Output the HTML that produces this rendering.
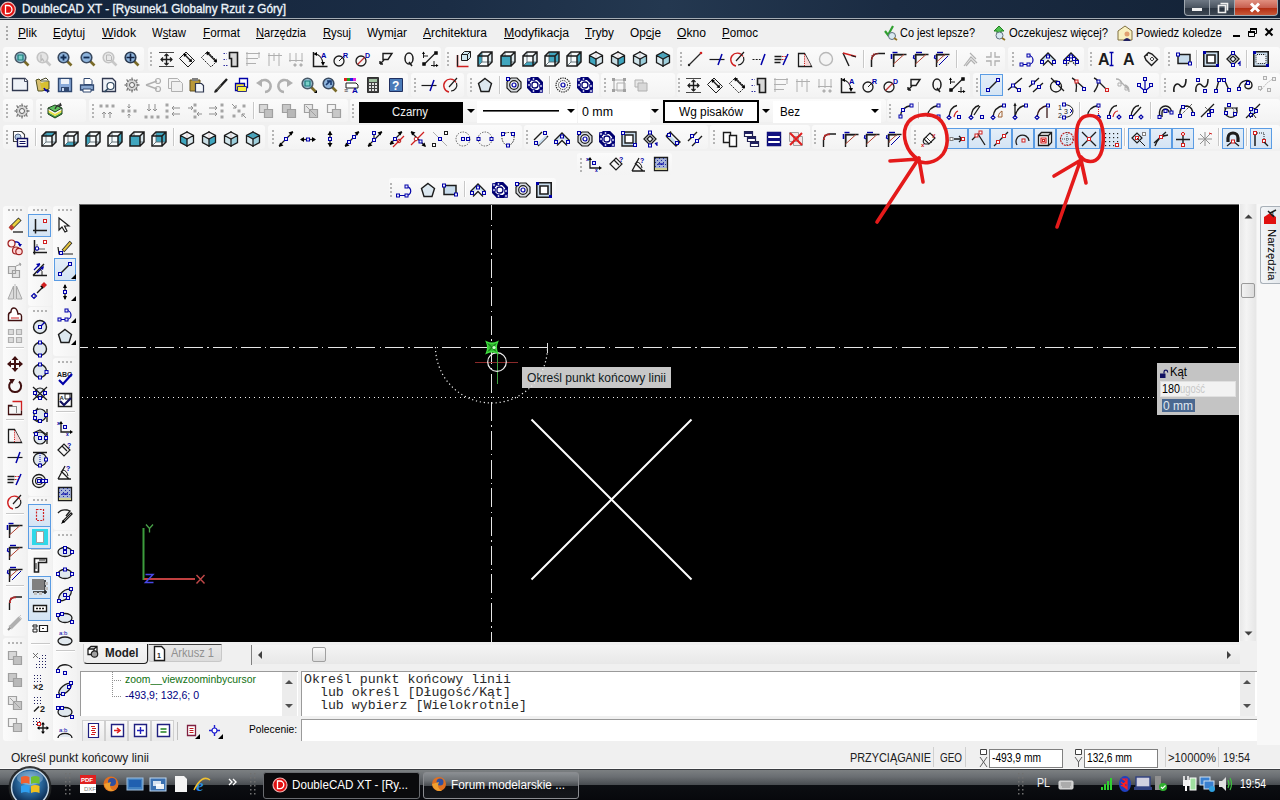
<!DOCTYPE html><html><head><meta charset="utf-8"><style>
*{margin:0;padding:0;box-sizing:border-box}
html,body{width:1280px;height:800px;overflow:hidden;background:#f0f0f0;font-family:"Liberation Sans",sans-serif}
body{position:relative}
.a{position:absolute}
.t{position:absolute;white-space:nowrap;line-height:1}
svg{position:absolute;left:0;top:0}
</style></head><body><div class="a" style="left:0px;top:0px;width:1280px;height:18px;background:linear-gradient(90deg,#13233a 0%,#1b2d45 35%,#243850 52%,#1a2b42 70%,#132236 100%)"></div><div class="a" style="left:0px;top:18px;width:1280px;height:1px;background:#a4acb4"></div><div class="a" style="left:0px;top:19px;width:1280px;height:1px;background:#1c2430"></div><div class="t" style="left:22px;top:2.92px;font-size:12.5px;color:#f4f8fc;font-family:'Liberation Sans',sans-serif;transform:scaleX(0.9390);transform-origin:0 0;-webkit-text-stroke:0.35px #e8f0f8">DoubleCAD XT - [Rysunek1 Globalny Rzut z Góry]</div><div class="a" style="left:1184px;top:0px;width:26px;height:16px;background:linear-gradient(#6e7884,#4a5460 50%,#2a3440 51%,#3c4652);border:1px solid #a0a8b0;border-top:none;border-radius:0 0 0 4px"></div><div class="a" style="left:1210px;top:0px;width:25px;height:16px;background:linear-gradient(#6e7884,#4a5460 50%,#2a3440 51%,#3c4652);border:1px solid #a0a8b0;border-top:none;border-left:none"></div><div class="a" style="left:1235px;top:0px;width:43px;height:16px;background:linear-gradient(#e09080,#c86050 50%,#b02a10 51%,#c85838);border:1px solid #a0a8b0;border-top:none;border-left:none;border-radius:0 0 4px 0"></div><div class="a" style="left:0px;top:20px;width:1280px;height:749px;background:#f0f0f0"></div><div class="a" style="left:110px;top:151px;width:1170px;height:53px;background:#f4f4f4"></div><div class="t" style="left:18px;top:26.84px;font-size:12px;color:#000;font-family:'Liberation Sans',sans-serif;transform:scaleX(0.9814);transform-origin:0 0;"><u>P</u>lik</div><div class="t" style="left:53px;top:26.84px;font-size:12px;color:#000;font-family:'Liberation Sans',sans-serif;transform:scaleX(0.9588);transform-origin:0 0;"><u>E</u>dytuj</div><div class="t" style="left:102px;top:26.84px;font-size:12px;color:#000;font-family:'Liberation Sans',sans-serif;transform:scaleX(1.0197);transform-origin:0 0;"><u>W</u>idok</div><div class="t" style="left:152px;top:26.84px;font-size:12px;color:#000;font-family:'Liberation Sans',sans-serif;transform:scaleX(0.9440);transform-origin:0 0;">W<u>s</u>taw</div><div class="t" style="left:203px;top:26.84px;font-size:12px;color:#000;font-family:'Liberation Sans',sans-serif;transform:scaleX(0.9729);transform-origin:0 0;"><u>F</u>ormat</div><div class="t" style="left:256px;top:26.84px;font-size:12px;color:#000;font-family:'Liberation Sans',sans-serif;transform:scaleX(0.9254);transform-origin:0 0;"><u>N</u>arzędzia</div><div class="t" style="left:323px;top:26.84px;font-size:12px;color:#000;font-family:'Liberation Sans',sans-serif;transform:scaleX(0.9328);transform-origin:0 0;"><u>R</u>ysuj</div><div class="t" style="left:367px;top:26.84px;font-size:12px;color:#000;font-family:'Liberation Sans',sans-serif;transform:scaleX(0.9861);transform-origin:0 0;">Wym<u>i</u>ar</div><div class="t" style="left:423px;top:26.84px;font-size:12px;color:#000;font-family:'Liberation Sans',sans-serif;transform:scaleX(0.9993);transform-origin:0 0;"><u>A</u>rchitektura</div><div class="t" style="left:504px;top:26.84px;font-size:12px;color:#000;font-family:'Liberation Sans',sans-serif;transform:scaleX(1.0256);transform-origin:0 0;"><u>M</u>odyfikacja</div><div class="t" style="left:585px;top:26.84px;font-size:12px;color:#000;font-family:'Liberation Sans',sans-serif;transform:scaleX(0.9810);transform-origin:0 0;"><u>T</u>ryby</div><div class="t" style="left:630px;top:26.84px;font-size:12px;color:#000;font-family:'Liberation Sans',sans-serif;transform:scaleX(0.9885);transform-origin:0 0;">Op<u>c</u>je</div><div class="t" style="left:677px;top:26.84px;font-size:12px;color:#000;font-family:'Liberation Sans',sans-serif;transform:scaleX(1.0103);transform-origin:0 0;"><u>O</u>kno</div><div class="t" style="left:722px;top:26.84px;font-size:12px;color:#000;font-family:'Liberation Sans',sans-serif;transform:scaleX(0.9636);transform-origin:0 0;"><u>P</u>omoc</div><div class="t" style="left:900px;top:26.84px;font-size:12px;color:#000;font-family:'Liberation Sans',sans-serif;transform:scaleX(0.9141);transform-origin:0 0;">Co jest lepsze?</div><div class="t" style="left:1009px;top:26.84px;font-size:12px;color:#000;font-family:'Liberation Sans',sans-serif;transform:scaleX(0.9395);transform-origin:0 0;">Oczekujesz więcej?</div><div class="t" style="left:1136px;top:26.84px;font-size:12px;color:#000;font-family:'Liberation Sans',sans-serif;transform:scaleX(0.9549);transform-origin:0 0;">Powiedz koledze</div><div class="a" style="left:79px;top:204px;width:1161px;height:439px;background:#ffffff"></div><div class="a" style="left:79px;top:204px;width:1160px;height:1px;background:#6a6a6a"></div><div class="a" style="left:79px;top:204px;width:1px;height:438px;background:#6a6a6a"></div><div class="a" style="left:80px;top:205px;width:1159px;height:437px;background:#000"></div><div class="a" style="left:1240px;top:204px;width:16px;height:437px;background:linear-gradient(90deg,#e8e8e8,#f4f4f4 40%,#e6e6e6)"></div><div class="a" style="left:1241px;top:283px;width:14px;height:15px;background:linear-gradient(90deg,#f2f2f2,#dcdcdc);border:1px solid #9a9a9a;border-radius:2px"></div><div class="a" style="left:1257px;top:204px;width:23px;height:541px;background:#f8f8f8"></div><div class="a" style="left:1260px;top:206px;width:20px;height:78px;background:linear-gradient(90deg,#f4f6f8,#e4e8ec);border:1px solid #a8b0b8;border-right:none;border-radius:3px 0 0 3px"></div><div class="a" style="left:80px;top:642px;width:1177px;height:23px;background:#f0f0f0"></div><div class="a" style="left:83px;top:644px;width:65px;height:20px;background:linear-gradient(#f6f6f6,#ececec);border-right:1px solid #202020;border-bottom:1.5px solid #202020;border-left:1px solid #d0d0d0;border-radius:0 0 4px 4px"></div><div class="a" style="left:148px;top:644px;width:74px;height:18px;background:linear-gradient(#e8e8e8,#dcdcdc);border:1px solid #c8c8c8;border-top:1px solid #404040;border-radius:0 0 3px 3px"></div><div class="t" style="left:104.5px;top:646.84px;font-size:12px;color:#202020;font-family:'Liberation Sans',sans-serif;transform:scaleX(0.9662);transform-origin:0 0;"><b>Model</b></div><div class="t" style="left:170.5px;top:646.84px;font-size:12px;color:#909090;font-family:'Liberation Sans',sans-serif;transform:scaleX(0.9210);transform-origin:0 0;">Arkusz 1</div><div class="a" style="left:251px;top:645px;width:1px;height:20px;background:#808080"></div><div class="a" style="left:252px;top:645px;width:988px;height:19px;background:linear-gradient(#f4f4f4,#e8e8e8)"></div><div class="a" style="left:312px;top:647px;width:14px;height:15px;background:linear-gradient(#fafafa,#dcdcdc);border:1px solid #a0a0a0;border-radius:2px"></div><div class="a" style="left:80px;top:671px;width:218px;height:45px;background:#fff;border-top:1px solid #9a9a9a;border-left:1px solid #9a9a9a"></div><div class="a" style="left:282px;top:672px;width:15px;height:44px;background:#ececec"></div><div class="t" style="left:125px;top:674.39px;font-size:11px;color:#107010;font-family:'Liberation Sans',sans-serif;transform:scaleX(0.9439);transform-origin:0 0;">zoom__viewzoominbycursor</div><div class="t" style="left:125px;top:690.09px;font-size:11px;color:#000080;font-family:'Liberation Sans',sans-serif;transform:scaleX(0.9603);transform-origin:0 0;">-493,9; 132,6; 0</div><div class="a" style="left:301px;top:671px;width:956px;height:45px;background:#fff;border-top:1px solid #9a9a9a;border-left:1px solid #9a9a9a"></div><div class="a" style="left:1240px;top:672px;width:15px;height:44px;background:#ececec"></div><div class="t" style="left:304px;top:673.00px;font-size:13px;color:#2a2a2a;font-family:'Liberation Mono',monospace;transform:scaleX(1.0205);transform-origin:0 0;white-space:pre">Określ punkt końcowy linii</div><div class="t" style="left:304px;top:686.00px;font-size:13px;color:#2a2a2a;font-family:'Liberation Mono',monospace;transform:scaleX(1.0205);transform-origin:0 0;white-space:pre">  lub określ [Długość/Kąt]</div><div class="t" style="left:304px;top:699.00px;font-size:13px;color:#2a2a2a;font-family:'Liberation Mono',monospace;transform:scaleX(1.0209);transform-origin:0 0;white-space:pre">  lub wybierz [Wielokrotnie]</div><div class="t" style="left:249px;top:723.69px;font-size:11px;color:#000;font-family:'Liberation Sans',sans-serif;transform:scaleX(0.9343);transform-origin:0 0;">Polecenie:</div><div class="a" style="left:301px;top:719px;width:956px;height:22px;background:#fff;border-top:1px solid #9a9a9a;border-left:1px solid #9a9a9a"></div><div class="t" style="left:11px;top:752.34px;font-size:12px;color:#202020;font-family:'Liberation Sans',sans-serif;transform:scaleX(0.9995);transform-origin:0 0;">Określ punkt końcowy linii</div><div class="t" style="left:850px;top:752.34px;font-size:12px;color:#202020;font-family:'Liberation Sans',sans-serif;transform:scaleX(0.9065);transform-origin:0 0;">PRZYCIĄGANIE</div><div class="t" style="left:940px;top:752.34px;font-size:12px;color:#202020;font-family:'Liberation Sans',sans-serif;transform:scaleX(0.8248);transform-origin:0 0;">GEO</div><div class="a" style="left:989px;top:749px;width:74px;height:19px;background:#fff;border:1px solid #808080"></div><div class="t" style="left:992px;top:752.34px;font-size:12px;color:#000;font-family:'Liberation Sans',sans-serif;transform:scaleX(0.8543);transform-origin:0 0;">-493,9 mm</div><div class="a" style="left:1084px;top:749px;width:74px;height:19px;background:#fff;border:1px solid #808080"></div><div class="t" style="left:1087px;top:752.34px;font-size:12px;color:#000;font-family:'Liberation Sans',sans-serif;transform:scaleX(0.8433);transform-origin:0 0;">132,6 mm</div><div class="t" style="left:1168px;top:752.34px;font-size:12px;color:#202020;font-family:'Liberation Sans',sans-serif;transform:scaleX(0.9403);transform-origin:0 0;">&gt;10000%</div><div class="t" style="left:1223px;top:752.34px;font-size:12px;color:#202020;font-family:'Liberation Sans',sans-serif;transform:scaleX(0.8991);transform-origin:0 0;">19:54</div><div class="a" style="left:0px;top:769px;width:1280px;height:31px;background:linear-gradient(#7e8284 0%,#6a6e72 25%,#4a4e52 50%,#0c0e12 52%,#07080c 100%)"></div><div class="a" style="left:0px;top:769px;width:1280px;height:1px;background:#3a3c40"></div><div class="a" style="left:0px;top:768px;width:1280px;height:1px;background:#fafafa"></div><div class="a" style="left:263px;top:772px;width:157px;height:27px;background:#0a0a0c;border:1px solid #6a6c70;border-radius:3px"></div><div class="a" style="left:423px;top:772px;width:156px;height:27px;background:linear-gradient(#8a8e92 0%,#6e7276 30%,#4a4e52 50%,#101216 52%,#14161a 100%);border:1px solid #8a8c90;border-radius:3px"></div><div class="t" style="left:292px;top:779.34px;font-size:12px;color:#fff;font-family:'Liberation Sans',sans-serif;transform:scaleX(0.9700);transform-origin:0 0;">DoubleCAD XT - [Ry...</div><div class="t" style="left:451px;top:779.34px;font-size:12px;color:#fff;font-family:'Liberation Sans',sans-serif;transform:scaleX(0.9824);transform-origin:0 0;">Forum modelarskie ...</div><div class="t" style="left:1037px;top:776.84px;font-size:12px;color:#f0f0f0;font-family:'Liberation Sans',sans-serif;transform:scaleX(0.8851);transform-origin:0 0;">PL</div><div class="t" style="left:1240px;top:778.44px;font-size:12px;color:#fff;font-family:'Liberation Sans',sans-serif;transform:scaleX(0.8658);transform-origin:0 0;">19:54</div><div class="a" style="left:522px;top:367px;width:149px;height:21px;background:#c8c8c8"></div><div class="t" style="left:527px;top:371.84px;font-size:12px;color:#101820;font-family:'Liberation Sans',sans-serif;transform:scaleX(1.0068);transform-origin:0 0;">Określ punkt końcowy linii</div><div class="a" style="left:1157px;top:363px;width:82px;height:52px;background:#c4c4c4"></div><div class="a" style="left:1160px;top:381px;width:76px;height:16px;background:#f2f2f2;border:1px solid #e0e0e0"></div><div class="t" style="left:1170px;top:365.54px;font-size:12px;color:#000;font-family:'Liberation Sans',sans-serif;transform:scaleX(0.9436);transform-origin:0 0;">Kąt</div><div class="t" style="left:1162px;top:382.64px;font-size:12px;color:#000;font-family:'Liberation Sans',sans-serif;transform:scaleX(0.8986);transform-origin:0 0;">180</div><div class="t" style="left:1180px;top:382.64px;font-size:12px;color:#c8c8c8;font-family:'Liberation Sans',sans-serif;transform:scaleX(0.7805);transform-origin:0 0;">ugość</div><div class="a" style="left:1162px;top:399px;width:33px;height:13px;background:#4a6890"></div><div class="t" style="left:1163px;top:399.84px;font-size:12px;color:#e0e8f0;font-family:'Liberation Sans',sans-serif;transform:scaleX(1.0000);transform-origin:0 0;">0 mm</div><div class="t" style="left:1265px;top:229px;font-size:11.5px;color:#000;transform-origin:0 0;transform:translate(11.5px,0) rotate(90deg) scaleX(0.99)">Narzędzia</div><div class="a" style="left:3px;top:47px;width:141px;height:24px;background:linear-gradient(#fbfbfb,#f3f3f3);border-radius:3px"></div><div class="a" style="left:148px;top:47px;width:293px;height:24px;background:linear-gradient(#fbfbfb,#f3f3f3);border-radius:3px"></div><div class="a" style="left:445px;top:47px;width:228px;height:24px;background:linear-gradient(#fbfbfb,#f3f3f3);border-radius:3px"></div><div class="a" style="left:677px;top:47px;width:328px;height:24px;background:linear-gradient(#fbfbfb,#f3f3f3);border-radius:3px"></div><div class="a" style="left:1008px;top:47px;width:76px;height:24px;background:linear-gradient(#fbfbfb,#f3f3f3);border-radius:3px"></div><div class="a" style="left:1088px;top:47px;width:72px;height:24px;background:linear-gradient(#fbfbfb,#f3f3f3);border-radius:3px"></div><div class="a" style="left:1164px;top:47px;width:116px;height:24px;background:linear-gradient(#fbfbfb,#f3f3f3);border-radius:3px"></div><div class="a" style="left:3px;top:73px;width:405px;height:24px;background:linear-gradient(#fbfbfb,#f3f3f3);border-radius:3px"></div><div class="a" style="left:411px;top:73px;width:53px;height:24px;background:linear-gradient(#fbfbfb,#f3f3f3);border-radius:3px"></div><div class="a" style="left:467px;top:73px;width:132px;height:24px;background:linear-gradient(#fbfbfb,#f3f3f3);border-radius:3px"></div><div class="a" style="left:601px;top:73px;width:74px;height:24px;background:linear-gradient(#fbfbfb,#f3f3f3);border-radius:3px"></div><div class="a" style="left:677px;top:73px;width:293px;height:24px;background:linear-gradient(#fbfbfb,#f3f3f3);border-radius:3px"></div><div class="a" style="left:973px;top:73px;width:186px;height:24px;background:linear-gradient(#fbfbfb,#f3f3f3);border-radius:3px"></div><div class="a" style="left:1161px;top:73px;width:119px;height:24px;background:linear-gradient(#fbfbfb,#f3f3f3);border-radius:3px"></div><div class="a" style="left:3px;top:99px;width:30px;height:23px;background:linear-gradient(#fbfbfb,#f3f3f3);border-radius:3px"></div><div class="a" style="left:36px;top:99px;width:50px;height:23px;background:linear-gradient(#fbfbfb,#f3f3f3);border-radius:3px"></div><div class="a" style="left:89px;top:99px;width:259px;height:23px;background:linear-gradient(#fbfbfb,#f3f3f3);border-radius:3px"></div><div class="a" style="left:350px;top:99px;width:536px;height:23px;background:linear-gradient(#fbfbfb,#f3f3f3);border-radius:3px"></div><div class="a" style="left:887px;top:99px;width:393px;height:23px;background:linear-gradient(#fbfbfb,#f3f3f3);border-radius:3px"></div><div class="a" style="left:3px;top:125px;width:262px;height:24px;background:linear-gradient(#fbfbfb,#f3f3f3);border-radius:3px"></div><div class="a" style="left:268px;top:125px;width:254px;height:24px;background:linear-gradient(#fbfbfb,#f3f3f3);border-radius:3px"></div><div class="a" style="left:524px;top:125px;width:184px;height:24px;background:linear-gradient(#fbfbfb,#f3f3f3);border-radius:3px"></div><div class="a" style="left:710px;top:125px;width:100px;height:24px;background:linear-gradient(#fbfbfb,#f3f3f3);border-radius:3px"></div><div class="a" style="left:812px;top:125px;width:96px;height:24px;background:linear-gradient(#fbfbfb,#f3f3f3);border-radius:3px"></div><div class="a" style="left:911px;top:125px;width:369px;height:24px;background:linear-gradient(#fbfbfb,#f3f3f3);border-radius:3px"></div><div class="a" style="left:577px;top:153px;width:95px;height:22px;background:linear-gradient(#fbfbfb,#f3f3f3);border-radius:3px"></div><div class="a" style="left:389px;top:178px;width:167px;height:22px;background:linear-gradient(#fbfbfb,#f3f3f3);border-radius:3px"></div><div class="a" style="left:980px;top:74px;width:23px;height:22px;background:linear-gradient(#e4eef8,#d4e4f4);border:1px solid #5a9ce4"></div><div class="a" style="left:946px;top:128px;width:22px;height:21px;background:linear-gradient(#e4eef8,#d4e4f4);border:1px solid #5a9ce4"></div><div class="a" style="left:968px;top:128px;width:22px;height:21px;background:linear-gradient(#e4eef8,#d4e4f4);border:1px solid #5a9ce4"></div><div class="a" style="left:990px;top:128px;width:22px;height:21px;background:linear-gradient(#e4eef8,#d4e4f4);border:1px solid #5a9ce4"></div><div class="a" style="left:1012px;top:128px;width:22px;height:21px;background:linear-gradient(#e4eef8,#d4e4f4);border:1px solid #5a9ce4"></div><div class="a" style="left:1034px;top:128px;width:22px;height:21px;background:linear-gradient(#e4eef8,#d4e4f4);border:1px solid #5a9ce4"></div><div class="a" style="left:1056px;top:128px;width:22px;height:21px;background:linear-gradient(#e4eef8,#d4e4f4);border:1px solid #5a9ce4"></div><div class="a" style="left:1078px;top:128px;width:22px;height:21px;background:linear-gradient(#e4eef8,#d4e4f4);border:1px solid #5a9ce4"></div><div class="a" style="left:1100px;top:128px;width:22px;height:21px;background:linear-gradient(#e4eef8,#d4e4f4);border:1px solid #5a9ce4"></div><div class="a" style="left:1128px;top:128px;width:22px;height:21px;background:linear-gradient(#e4eef8,#d4e4f4);border:1px solid #5a9ce4"></div><div class="a" style="left:1150px;top:128px;width:22px;height:21px;background:linear-gradient(#e4eef8,#d4e4f4);border:1px solid #5a9ce4"></div><div class="a" style="left:1172px;top:128px;width:22px;height:21px;background:linear-gradient(#e4eef8,#d4e4f4);border:1px solid #5a9ce4"></div><div class="a" style="left:1222px;top:128px;width:22px;height:21px;background:linear-gradient(#e4eef8,#d4e4f4);border:1px solid #5a9ce4"></div><div class="a" style="left:1250px;top:128px;width:22px;height:21px;background:linear-gradient(#e4eef8,#d4e4f4);border:1px solid #5a9ce4"></div><div class="a" style="left:359px;top:102px;width:104px;height:21px;background:#000"></div><div class="t" style="left:392px;top:106.34px;font-size:12px;color:#f0f0f0;font-family:'Liberation Sans',sans-serif;transform:scaleX(0.9470);transform-origin:0 0;">Czarny</div><div class="a" style="left:477px;top:101px;width:100px;height:22px;background:#fff"></div><div class="a" style="left:578px;top:101px;width:72px;height:22px;background:#fff"></div><div class="t" style="left:582px;top:106.34px;font-size:12px;color:#000;font-family:'Liberation Sans',sans-serif;transform:scaleX(1.0333);transform-origin:0 0;">0 mm</div><div class="a" style="left:663px;top:100px;width:96px;height:23px;background:#fff;border:2px solid #000"></div><div class="t" style="left:679px;top:106.34px;font-size:12px;color:#000;font-family:'Liberation Sans',sans-serif;transform:scaleX(0.9894);transform-origin:0 0;">Wg pisaków</div><div class="a" style="left:773px;top:101px;width:108px;height:22px;background:#fff"></div><div class="t" style="left:780px;top:106.34px;font-size:12px;color:#000;font-family:'Liberation Sans',sans-serif;transform:scaleX(0.9668);transform-origin:0 0;">Bez</div><div class="a" style="left:3px;top:206px;width:23px;height:430px;background:linear-gradient(90deg,#fbfbfb,#f2f2f2);border-radius:3px"></div><div class="a" style="left:3px;top:638px;width:23px;height:103px;background:linear-gradient(90deg,#fbfbfb,#f2f2f2);border-radius:3px"></div><div class="a" style="left:28px;top:206px;width:24px;height:100px;background:linear-gradient(90deg,#fbfbfb,#f2f2f2);border-radius:3px"></div><div class="a" style="left:28px;top:307px;width:24px;height:189px;background:linear-gradient(90deg,#fbfbfb,#f2f2f2);border-radius:3px"></div><div class="a" style="left:28px;top:497px;width:24px;height:244px;background:linear-gradient(90deg,#fbfbfb,#f2f2f2);border-radius:3px"></div><div class="a" style="left:53px;top:206px;width:24px;height:150px;background:linear-gradient(90deg,#fbfbfb,#f2f2f2);border-radius:3px"></div><div class="a" style="left:53px;top:358px;width:24px;height:172px;background:linear-gradient(90deg,#fbfbfb,#f2f2f2);border-radius:3px"></div><div class="a" style="left:53px;top:531px;width:24px;height:210px;background:linear-gradient(90deg,#fbfbfb,#f2f2f2);border-radius:3px"></div><div class="a" style="left:28px;top:214px;width:23px;height:23px;background:linear-gradient(#e4eef8,#d4e4f4);border:1px solid #5a9ce4"></div><div class="a" style="left:54px;top:258px;width:22px;height:23px;background:linear-gradient(#e4eef8,#d4e4f4);border:1px solid #5a9ce4"></div><div class="a" style="left:28px;top:504px;width:23px;height:23px;background:linear-gradient(#e4eef8,#d4e4f4);border:1px solid #5a9ce4"></div><div class="a" style="left:28px;top:526px;width:23px;height:23px;background:linear-gradient(#e4eef8,#d4e4f4);border:1px solid #5a9ce4"></div><div class="a" style="left:28px;top:576px;width:23px;height:23px;background:linear-gradient(#e4eef8,#d4e4f4);border:1px solid #5a9ce4"></div><div class="a" style="left:28px;top:598px;width:23px;height:23px;background:linear-gradient(#e4eef8,#d4e4f4);border:1px solid #5a9ce4"></div><div class="a" style="left:82px;top:720px;width:23px;height:21px;background:linear-gradient(#fafafa,#eaeaea);border:1px solid #d0d0d0;border-bottom:none"></div><div class="a" style="left:105px;top:720px;width:23px;height:21px;background:linear-gradient(#fafafa,#eaeaea);border:1px solid #d0d0d0;border-bottom:none"></div><div class="a" style="left:128px;top:720px;width:23px;height:21px;background:linear-gradient(#fafafa,#eaeaea);border:1px solid #d0d0d0;border-bottom:none"></div><div class="a" style="left:151px;top:720px;width:23px;height:21px;background:linear-gradient(#fafafa,#eaeaea);border:1px solid #d0d0d0;border-bottom:none"></div><svg width="1280" height="800" viewBox="0 0 1280 800"><rect x="6" y="26" width="2" height="2" fill="#a8a8a8"/><rect x="6" y="30" width="2" height="2" fill="#a8a8a8"/><rect x="6" y="34" width="2" height="2" fill="#a8a8a8"/><rect x="6" y="38" width="2" height="2" fill="#a8a8a8"/><rect x="6" y="52" width="2" height="2" fill="#b4b4b4"/><rect x="6" y="56" width="2" height="2" fill="#b4b4b4"/><rect x="6" y="60" width="2" height="2" fill="#b4b4b4"/><rect x="6" y="64" width="2" height="2" fill="#b4b4b4"/><rect x="150" y="52" width="2" height="2" fill="#b4b4b4"/><rect x="150" y="56" width="2" height="2" fill="#b4b4b4"/><rect x="150" y="60" width="2" height="2" fill="#b4b4b4"/><rect x="150" y="64" width="2" height="2" fill="#b4b4b4"/><rect x="447" y="52" width="2" height="2" fill="#b4b4b4"/><rect x="447" y="56" width="2" height="2" fill="#b4b4b4"/><rect x="447" y="60" width="2" height="2" fill="#b4b4b4"/><rect x="447" y="64" width="2" height="2" fill="#b4b4b4"/><rect x="680" y="52" width="2" height="2" fill="#b4b4b4"/><rect x="680" y="56" width="2" height="2" fill="#b4b4b4"/><rect x="680" y="60" width="2" height="2" fill="#b4b4b4"/><rect x="680" y="64" width="2" height="2" fill="#b4b4b4"/><rect x="1012" y="52" width="2" height="2" fill="#b4b4b4"/><rect x="1012" y="56" width="2" height="2" fill="#b4b4b4"/><rect x="1012" y="60" width="2" height="2" fill="#b4b4b4"/><rect x="1012" y="64" width="2" height="2" fill="#b4b4b4"/><rect x="1090" y="52" width="2" height="2" fill="#b4b4b4"/><rect x="1090" y="56" width="2" height="2" fill="#b4b4b4"/><rect x="1090" y="60" width="2" height="2" fill="#b4b4b4"/><rect x="1090" y="64" width="2" height="2" fill="#b4b4b4"/><rect x="1168" y="52" width="2" height="2" fill="#b4b4b4"/><rect x="1168" y="56" width="2" height="2" fill="#b4b4b4"/><rect x="1168" y="60" width="2" height="2" fill="#b4b4b4"/><rect x="1168" y="64" width="2" height="2" fill="#b4b4b4"/><rect x="863" y="50" width="1" height="18" fill="#c8c8c8"/><rect x="864" y="50" width="1" height="18" fill="#ffffff"/><rect x="956" y="50" width="1" height="18" fill="#c8c8c8"/><rect x="957" y="50" width="1" height="18" fill="#ffffff"/><rect x="1196" y="50" width="1" height="18" fill="#c8c8c8"/><rect x="1197" y="50" width="1" height="18" fill="#ffffff"/><rect x="1246" y="50" width="1" height="18" fill="#c8c8c8"/><rect x="1247" y="50" width="1" height="18" fill="#ffffff"/><g transform="translate(14,51)"><path d="M9.5 9.5 L14.5 14.5" fill="none" stroke="#7a6a28" stroke-width="2.6" /><circle cx="6.5" cy="6.5" r="5.3" fill="#9cc4d8" stroke="#4a5a68" stroke-width="1.6"/><path d="M4 4h5v5h-5z" fill="#7ad0c8" stroke="#1a7a7a" stroke-width="1.2" /></g><g transform="translate(36,51)"><path d="M9.5 9.5 L14.5 14.5" fill="none" stroke="#c8c8c8" stroke-width="2.6" /><circle cx="6.5" cy="6.5" r="5.3" fill="#e4e4e4" stroke="#c4c4c4" stroke-width="1.6"/><path d="M5 3.5 L5 9.5 L6.5 8 L8 10.5" fill="none" stroke="#b8b8b8" stroke-width="1.2" /></g><g transform="translate(57,51)"><path d="M9.5 9.5 L14.5 14.5" fill="none" stroke="#7a6a28" stroke-width="2.6" /><circle cx="6.5" cy="6.5" r="5.3" fill="#8eb4dc" stroke="#3a4a60" stroke-width="1.6"/><path d="M3.5 6.5h6M6.5 3.5v6" fill="none" stroke="#102a50" stroke-width="1.8" /></g><g transform="translate(80,51)"><path d="M9.5 9.5 L14.5 14.5" fill="none" stroke="#7a6a28" stroke-width="2.6" /><circle cx="6.5" cy="6.5" r="5.3" fill="#8eb4dc" stroke="#3a4a60" stroke-width="1.6"/><path d="M3.5 6.5h6" fill="none" stroke="#102a50" stroke-width="1.8" /></g><g transform="translate(102,51)"><path d="M9.5 9.5 L14.5 14.5" fill="none" stroke="#c8c8c8" stroke-width="2.6" /><circle cx="6.5" cy="6.5" r="5.3" fill="#e8e8e8" stroke="#c4c4c4" stroke-width="1.6"/><path d="M4.5 4h3.5l1.5 1.5v4h-5z" fill="none" stroke="#b8b8b8" stroke-width="1" /></g><g transform="translate(124,51)"><path d="M9.5 9.5 L14.5 14.5" fill="none" stroke="#7a6a28" stroke-width="2.6" /><circle cx="6.5" cy="6.5" r="5.3" fill="#8eb4dc" stroke="#2a3a50" stroke-width="1.6"/><path d="M2.5 6.5h8M6.5 2.5v8" fill="none" stroke="#102040" stroke-width="1.6" /></g><g transform="translate(158,51)"><path d="M1 1.5h15M1 15.5h15" fill="none" stroke="#1c1c1c" stroke-width="1.2" opacity="0.8"/><path d="M8.5 3v11M3 8.5h11" fill="none" stroke="#1c1c1c" stroke-width="1.4" /><path d="M6.5 5 L8.5 3 L10.5 5 M6.5 12 L8.5 14 L10.5 12 M5 6.5 L3 8.5 L5 10.5 M12 6.5 L14 8.5 L12 10.5" fill="none" stroke="#1c1c1c" stroke-width="1.2" /></g><g transform="translate(179,51)"><path d="M0.5 7.5 L7 1 L15.5 9.5 L9 16 Z" fill="none" stroke="#1c1c1c" stroke-width="1" /><path d="M5.5 3.5 L12 10" fill="none" stroke="#1c1c1c" stroke-width="1.4" /><path d="M4.5 2.5 L8 3 L5 6z M13 11 L12.5 7.5 L9.5 10.5z" fill="#000"/></g><g transform="translate(201,51)"><path d="M0.5 6.5 L6.5 0.5 L16 10 L10 16 Z" fill="none" stroke="#1c1c1c" stroke-width="1" stroke-dasharray="1.5 1"/><path d="M6 1.5 L15 10.5" fill="none" stroke="#1c1c1c" stroke-width="1.4" /><path d="M5 1 L9 1.3 L6 4.5z M16 11.5 L15.5 7.5 L12.5 10.5z" fill="#000"/></g><g transform="translate(223,51)"><path d="M0.5 2.5h3M0.5 8.5h3M0.5 14.5h4" fill="none" stroke="#3030a0" stroke-width="1" stroke-dasharray="1.5 1"/><path d="M6.5 1.5h8v14h-6v-8h-2z" fill="#d8d8d8" stroke="#1c1c1c" stroke-width="1.6" /></g><g transform="translate(245,51)"><path d="M1 2.5h14M1 7.5h12M1 12.5h10M2 1v14M14 1v6" fill="none" stroke="#b0b0b0" stroke-width="1" /></g><g transform="translate(267,51)"><path d="M1 4.5h14M2 2v13M7 2v8M12 2v13" fill="none" stroke="#b0b0b0" stroke-width="1" /></g><g transform="translate(288,51)"><path d="M1 9.5h14M2 2v9M8 2v9M14 2v9" fill="none" stroke="#b0b0b0" stroke-width="1" /><path d="M6 13h2v2h-2zM12 13h2v2h-2z" fill="#b0b0b0" stroke="#b0b0b0" stroke-width="1" /></g><g transform="translate(312,51)"><path d="M1.5 1v14.5h14" fill="none" stroke="#1c1c1c" stroke-width="1.5" /><path d="M2.5 3 Q10 3.5 11 13" fill="none" stroke="#1c1c1c" stroke-width="1.1" /><path d="M1.5 3 L5 1 L5 5z M11 15 L9 11 L13 11z" fill="#000"/><text x="9" y="7" font-family="Liberation Sans" font-size="7.5" font-weight="bold" fill="#0000a8">A</text></g><g transform="translate(333,51)"><circle cx="6" cy="10" r="5" fill="none" stroke="#1c1c1c" stroke-width="1.3"/><path d="M6 10 L11 5" fill="none" stroke="#1c1c1c" stroke-width="1" /><text x="10" y="6.5" font-family="Liberation Sans" font-size="7" font-weight="bold" fill="#0000a8">R</text></g><g transform="translate(355,51)"><circle cx="6" cy="10" r="5" fill="none" stroke="#1c1c1c" stroke-width="1.3"/><path d="M2.5 13.5 L9.5 6.5" fill="none" stroke="#c03030" stroke-width="1.2" /><text x="10" y="6.5" font-family="Liberation Sans" font-size="7" font-weight="bold" fill="#0000a8">D</text></g><g transform="translate(377,51)"><path d="M3 13 L7 9 M3 13v-3M3 13h3" fill="none" stroke="#1c1c1c" stroke-width="1.4" /><path d="M6 8.5h5l4 -6h-9z" fill="none" stroke="#1c1c1c" stroke-width="1.4" /></g><g transform="translate(401,51)"><ellipse cx="8" cy="7.5" rx="4" ry="5.5" fill="none" stroke="#1c1c1c" stroke-width="1.5"/><path d="M8 11 L11 15" fill="none" stroke="#1c1c1c" stroke-width="1.5" /></g><g transform="translate(422,51)"><path d="M1.5 14 L14 1.5" fill="none" stroke="#1c1c1c" stroke-width="1.3" /><path d="M1.5 1v6M1 5h5M9 14.5h6M12 10v6" fill="none" stroke="#1c1c1c" stroke-width="1" /><path d="M0 3 L3 3 L1.5 0.5z M14 13 L14 16 L16.5 14.5z" fill="#000"/><rect x="0.75" y="11.75" width="2.5" height="2.5" fill="#000" stroke="#1c1c1c" stroke-width="1"/><rect x="12.75" y="0.75" width="2.5" height="2.5" fill="#000" stroke="#1c1c1c" stroke-width="1"/></g><g transform="translate(455,51)"><path d="M2.5 4v11.5h11" fill="none" stroke="#d02020" stroke-width="1.5" /><path d="M2.5 4v11.5" fill="none" stroke="#1c1c1c" stroke-width="1.2" /><path d="M6.5 3.5l3 -3h6v6l-3 3h-6z M6.5 3.5h6v6M12.5 3.5l3 -3" fill="#d0e8f0" stroke="#1c1c1c" stroke-width="1" /></g><g transform="translate(477,51)"><path d="M1 5 L5 1 H15 V11 L11 15 H1z" fill="#f6fafb"/><path d="M11 5 L15 1 V11 L11 15z" fill="#dde9ee"/><path d="M1 5 L5 1 V11 L1 15z" fill="#40a6bf"/><path d="M5 1 V11 H15 M5 11 L1 15" fill="none" stroke="#5a6a70" stroke-width="0.9" /><path d="M1 5 H11 V15 H1z M1 5 L5 1 H15 V11 L11 15 M11 5 L15 1" fill="none" stroke="#1c1c1c" stroke-width="1.5" /></g><g transform="translate(500,51)"><path d="M1 5 L5 1 H15 V11 L11 15 H1z" fill="#f6fafb"/><path d="M11 5 L15 1 V11 L11 15z" fill="#dde9ee"/><path d="M5 1 V11 H15 M5 11 L1 15" fill="none" stroke="#5a6a70" stroke-width="0.9" /><path d="M1 5 H11 V15 H1z" fill="#40a6bf"/><path d="M1 5 H11 V15 H1z M1 5 L5 1 H15 V11 L11 15 M11 5 L15 1" fill="none" stroke="#1c1c1c" stroke-width="1.5" /></g><g transform="translate(522,51)"><path d="M1 5 L5 1 H15 V11 L11 15 H1z" fill="#f6fafb"/><path d="M11 5 L15 1 V11 L11 15z" fill="#dde9ee"/><path d="M1 15 L5 11 H15 L11 15z" fill="#40a6bf"/><path d="M5 1 V11 H15 M5 11 L1 15" fill="none" stroke="#5a6a70" stroke-width="0.9" /><path d="M1 5 H11 V15 H1z M1 5 L5 1 H15 V11 L11 15 M11 5 L15 1" fill="none" stroke="#1c1c1c" stroke-width="1.5" /></g><g transform="translate(544,51)"><path d="M1 5 L5 1 H15 V11 L11 15 H1z" fill="#f6fafb"/><path d="M11 5 L15 1 V11 L11 15z" fill="#dde9ee"/><path d="M5 1 H15 V11 H5z" fill="#40a6bf"/><path d="M5 1 V11 H15 M5 11 L1 15" fill="none" stroke="#5a6a70" stroke-width="0.9" /><path d="M1 5 H11 V15 H1z M1 5 L5 1 H15 V11 L11 15 M11 5 L15 1" fill="none" stroke="#1c1c1c" stroke-width="1.5" /></g><g transform="translate(566,51)"><path d="M1 5 L5 1 H15 V11 L11 15 H1z" fill="#f6fafb"/><path d="M11 5 L15 1 V11 L11 15z" fill="#dde9ee"/><path d="M11 5 L15 1 V11 L11 15z" fill="#40a6bf"/><path d="M5 1 V11 H15 M5 11 L1 15" fill="none" stroke="#5a6a70" stroke-width="0.9" /><path d="M1 5 H11 V15 H1z M1 5 L5 1 H15 V11 L11 15 M11 5 L15 1" fill="none" stroke="#1c1c1c" stroke-width="1.5" /></g><g transform="translate(588,51)"><path d="M8 1 L14.5 4.5 L8 8 L1.5 4.5z" fill="#f4f8fa"/><path d="M1.5 4.5 L8 8 V15 L1.5 11.5z" fill="#40a6bf"/><path d="M14.5 4.5 L8 8 V15 L14.5 11.5z" fill="#d8e8ee"/><path d="M8 1 V8" fill="none" stroke="#c08080" stroke-width="0.8" opacity=".5"/><path d="M8 1 L14.5 4.5 V11.5 L8 15 L1.5 11.5 V4.5z M1.5 4.5 L8 8 L14.5 4.5" fill="none" stroke="#1c1c1c" stroke-width="1.3" /><path d="M8 8 V16" fill="none" stroke="#1c1c1c" stroke-width="1.3" /><path d="M8 0 V2" fill="none" stroke="#1c1c1c" stroke-width="1" /></g><g transform="translate(610,51)"><path d="M8 1 L14.5 4.5 L8 8 L1.5 4.5z" fill="#f4f8fa"/><path d="M1.5 4.5 L8 8 V15 L1.5 11.5z" fill="#c8dde4"/><path d="M14.5 4.5 L8 8 V15 L14.5 11.5z" fill="#40a6bf"/><path d="M8 1 V8" fill="none" stroke="#c08080" stroke-width="0.8" opacity=".5"/><path d="M8 1 L14.5 4.5 V11.5 L8 15 L1.5 11.5 V4.5z M1.5 4.5 L8 8 L14.5 4.5" fill="none" stroke="#1c1c1c" stroke-width="1.3" /><path d="M8 8 V16" fill="none" stroke="#1c1c1c" stroke-width="1.3" /><path d="M8 0 V2" fill="none" stroke="#1c1c1c" stroke-width="1" /></g><g transform="translate(632,51)"><path d="M8 1 L14.5 4.5 L8 8 L1.5 4.5z" fill="#e8f2f6"/><path d="M1.5 4.5 L8 8 V15 L1.5 11.5z" fill="#d0e4ea"/><path d="M14.5 4.5 L8 8 V15 L14.5 11.5z" fill="#9ccfdc"/><path d="M8 1 V8" fill="none" stroke="#c08080" stroke-width="0.8" opacity=".5"/><path d="M8 1 L14.5 4.5 V11.5 L8 15 L1.5 11.5 V4.5z M1.5 4.5 L8 8 L14.5 4.5" fill="none" stroke="#1c1c1c" stroke-width="1.3" /><path d="M8 8 V16" fill="none" stroke="#1c1c1c" stroke-width="1.3" /><path d="M8 0 V2" fill="none" stroke="#1c1c1c" stroke-width="1" /></g><g transform="translate(655,51)"><path d="M8 1 L14.5 4.5 L8 8 L1.5 4.5z" fill="#40a6bf"/><path d="M1.5 4.5 L8 8 V15 L1.5 11.5z" fill="#d8eaf0"/><path d="M14.5 4.5 L8 8 V15 L14.5 11.5z" fill="#a0d0dc"/><path d="M8 1 V8" fill="none" stroke="#c08080" stroke-width="0.8" opacity=".5"/><path d="M8 1 L14.5 4.5 V11.5 L8 15 L1.5 11.5 V4.5z M1.5 4.5 L8 8 L14.5 4.5" fill="none" stroke="#1c1c1c" stroke-width="1.3" /><path d="M8 8 V16" fill="none" stroke="#1c1c1c" stroke-width="1.3" /><path d="M8 0 V2" fill="none" stroke="#1c1c1c" stroke-width="1" /></g><g transform="translate(687,51)"><path d="M2 14 L14 2" fill="none" stroke="#2a2a2a" stroke-width="1.2" /><circle cx="2" cy="14" r="1.2" fill="#202020"/><circle cx="14" cy="2" r="1.3" fill="#d02020"/></g><g transform="translate(709,51)"><path d="M0.5 8.5h15" fill="none" stroke="#1c1c1c" stroke-width="1.2" /><path d="M9 14 L13 3" fill="none" stroke="#0000a8" stroke-width="1.5" /></g><g transform="translate(730,51)"><path d="M6 15 A6.5 6.5 0 1 1 13 5.5" fill="none" stroke="#d02020" stroke-width="1.4" /><path d="M8 14 A 6 6 0 0 0 13.5 6" fill="none" stroke="#1c1c1c" stroke-width="1.2" /><path d="M6 10 L14 1" fill="none" stroke="#1c1c1c" stroke-width="1.2" /></g><g transform="translate(752,51)"><path d="M0.5 8.5h8" fill="none" stroke="#1c1c1c" stroke-width="1.2" stroke-dasharray="2 1.2"/><path d="M9 14 L13 3" fill="none" stroke="#0000a8" stroke-width="1.5" /></g><g transform="translate(774,51)"><path d="M0.5 5.5h7M0.5 8.5h7M0.5 11.5h6" fill="none" stroke="#1c1c1c" stroke-width="1.3" /><path d="M8 5.5h4M8 8.5h4" fill="none" stroke="#d02020" stroke-width="1" stroke-dasharray="1.5 1"/><path d="M9 14 L14 3" fill="none" stroke="#0000a8" stroke-width="1.5" /></g><g transform="translate(797,51)"><path d="M1.5 2.5h6l7 13h-13z" fill="none" stroke="#1c1c1c" stroke-width="1.3" /><path d="M8 3.5 L14 14.5 H8z" fill="#f8d8d8"/><path d="M7.5 3v12" fill="none" stroke="#d02020" stroke-width="1" stroke-dasharray="1.2 1"/></g><g transform="translate(818,51)"><circle cx="8" cy="8" r="6.5" fill="#f4f4f4" stroke="#b8b8b8" stroke-width="1.4"/></g><g transform="translate(841,51)"><path d="M2 2 L8 15" fill="none" stroke="#1c1c1c" stroke-width="1.4" /><path d="M2 2 L15 5.5" fill="none" stroke="#d02020" stroke-width="1.3" /><path d="M10 4.5 L15 6" fill="none" stroke="#1c1c1c" stroke-width="1.3" /></g><g transform="translate(869,51)"><path d="M2.5 16V9 Q3 2.5 9.5 2.5H16" fill="none" stroke="#1c1c1c" stroke-width="1.5" /><path d="M3 9 Q4 3.5 9.5 3" fill="none" stroke="#d02020" stroke-width="1" opacity=".0"/><path d="M4 3h4M3 4v4" fill="none" stroke="#d02020" stroke-width="1" stroke-dasharray="1 1"/><path d="M2.5 9 Q3.5 3 9.5 2.5" fill="none" stroke="#a03030" stroke-width="1.2" /></g><g transform="translate(891,51)"><path d="M1.5 1.5h5" fill="none" stroke="#0000a8" stroke-width="1.4" /><path d="M2.5 16V3.5h13" fill="none" stroke="#1c1c1c" stroke-width="1.4" /><path d="M3.5 4.5h7M3.5 4.5v7" fill="none" stroke="#1c1c1c" stroke-width="1" stroke-dasharray="1 1"/><path d="M2.5 13 L13 3.5" fill="none" stroke="#b04030" stroke-width="1" /><path d="M0.5 3v5" fill="none" stroke="#0000a8" stroke-width="1.6" /></g><g transform="translate(913,51)"><path d="M3 1.5h6" fill="none" stroke="#0000a8" stroke-width="1.4" /><path d="M2.5 16V3.5h13" fill="none" stroke="#1c1c1c" stroke-width="1.4" /><path d="M3.5 4.5h7M3.5 4.5v7" fill="none" stroke="#1c1c1c" stroke-width="1" stroke-dasharray="1 1"/><path d="M2.5 13 L13 3.5" fill="none" stroke="#b04030" stroke-width="1" /><path d="M1 4 L0.5 7 L2 8" fill="none" stroke="#0000a8" stroke-width="1.4" /></g><g transform="translate(934,51)"><path d="M3 1.5h6" fill="none" stroke="#0000a8" stroke-width="1.4" /><path d="M2.5 16V3.5h13" fill="none" stroke="#1c1c1c" stroke-width="1.4" /><path d="M3.5 4.5h7M3.5 4.5v7" fill="none" stroke="#1c1c1c" stroke-width="1" stroke-dasharray="1 1"/><path d="M2.5 11 L11 3.5" fill="none" stroke="#b04030" stroke-width="1" /><path d="M5 14 L14 5" fill="none" stroke="#0000a8" stroke-width="1" /><path d="M1 4 L0.5 7 L2 8" fill="none" stroke="#0000a8" stroke-width="1.4" /></g><g transform="translate(962,51)"><path d="M2 15 L9 6 L15 12 M4 15 L9 9 L13 13 M8 2 L14 8" fill="none" stroke="#b0b0b0" stroke-width="1.2" /></g><g transform="translate(985,51)"><path d="M6 1v5h-5M10 1v5h5M6 15v-5h-5M10 15v-5h5" fill="none" stroke="#b0b0b0" stroke-width="1.3" /></g><g transform="translate(1019,51)"><path d="M2.5 13.5h7 A4.5 4.5 0 1 0 9.5 4.5" fill="none" stroke="#0000a8" stroke-width="1.2" /><rect x="1.0" y="12.0" width="3" height="3" fill="#e8e8ff" stroke="#0000a8" stroke-width="1"/><rect x="8.0" y="12.0" width="3" height="3" fill="#e8e8ff" stroke="#0000a8" stroke-width="1"/><rect x="8.0" y="3.0" width="3" height="3" fill="#e8e8ff" stroke="#0000a8" stroke-width="1"/></g><g transform="translate(1040,51)"><path d="M1 9 L8 2 L15 9 L13 11 L8 6 L3 11z" fill="#c8dcec"/><path d="M0.5 9.5 L8 2 L15.5 9.5" fill="none" stroke="#1c1c1c" stroke-width="1.3" /><path d="M3 14.5 L8 9.5 L13 14.5" fill="none" stroke="#1c1c1c" stroke-width="1.3" /><rect x="6.5" y="4.0" width="3" height="3" fill="#e8e8ff" stroke="#0000a8" stroke-width="1"/><rect x="0.5" y="9.5" width="3" height="3" fill="#e8e8ff" stroke="#0000a8" stroke-width="1"/><rect x="12.5" y="9.5" width="3" height="3" fill="#e8e8ff" stroke="#0000a8" stroke-width="1"/></g><g transform="translate(1063,51)"><path d="M1 9 L8 2 L15 9 L13 11 L8 6 L3 11z" fill="#c8dcec"/><path d="M0.5 9.5 L8 2 L15.5 9.5" fill="none" stroke="#1c1c1c" stroke-width="1.3" /><path d="M3 14.5 L8 9.5 L13 14.5" fill="none" stroke="#1c1c1c" stroke-width="1.3" stroke-dasharray="1.5 1"/><rect x="6.5" y="4.0" width="3" height="3" fill="#e8e8ff" stroke="#0000a8" stroke-width="1"/><rect x="0.5" y="9.5" width="3" height="3" fill="#e8e8ff" stroke="#0000a8" stroke-width="1"/><rect x="12.5" y="9.5" width="3" height="3" fill="#e8e8ff" stroke="#0000a8" stroke-width="1"/><rect x="3.5" y="6.5" width="3" height="3" fill="#e8e8ff" stroke="#0000a8" stroke-width="1"/><rect x="9.5" y="6.5" width="3" height="3" fill="#e8e8ff" stroke="#0000a8" stroke-width="1"/></g><g transform="translate(1098,51)"><text x="0" y="14" font-family="Liberation Sans" font-size="16" font-weight="bold" fill="#1c1c1c">A</text><path d="M11.5 1.5h4M13.5 1.5v13M11.5 14.5h4" fill="none" stroke="#0000a8" stroke-width="1.3" /></g><g transform="translate(1121,51)"><text x="2" y="14" font-family="Liberation Sans" font-size="16" font-weight="bold" fill="#1c1c1c">A</text></g><g transform="translate(1143,51)"><path d="M1.5 5.5 L5.5 1.5 L9 3 L14.5 8.5 L8.5 14.5 L3 9z" fill="#f0f0f0" stroke="#1c1c1c" stroke-width="1.4" /><path d="M7 8 l2 -2 l2 2 l-2 2z" fill="none" stroke="#1c1c1c" stroke-width="0.8" /><circle cx="4" cy="4" r="1" fill="#1c1c1c"/></g><g transform="translate(1176,51)"><path d="M2 3.5h12v9h-12z" fill="#c8dcec" stroke="#1c1c1c" stroke-width="1.5" /><rect x="0.5" y="2.0" width="3" height="3" fill="#e8e8ff" stroke="#0000a8" stroke-width="1"/><rect x="12.5" y="11.0" width="3" height="3" fill="#e8e8ff" stroke="#0000a8" stroke-width="1"/></g><g transform="translate(1203,51)"><path d="M0.8 0.8h14.4v14.4h-14.4z" fill="#c8dcec" stroke="#1c1c1c" stroke-width="1.6" /><path d="M4 4h8v8h-8z" fill="#fff" stroke="#1c1c1c" stroke-width="1.6" /><path d="M0 0h3v3h-3z M13 13h3v3h-3z" fill="#0000a8"/></g><g transform="translate(1226,51)"><path d="M1 8 L7 2 L13 8 L7 14z" fill="#eef4f8" stroke="#1c1c1c" stroke-width="1.4" /><path d="M4 8 L7 5 L10 8 L7 11z" fill="none" stroke="#1c1c1c" stroke-width="1.2" /><rect x="5.5" y="0.5" width="3" height="3" fill="#e8e8ff" stroke="#0000a8" stroke-width="1"/><rect x="5.5" y="12.5" width="3" height="3" fill="#e8e8ff" stroke="#0000a8" stroke-width="1"/><path d="M12 13 L14 11 V15" fill="none" stroke="#0000a8" stroke-width="1.2" /></g><g transform="translate(1253,51)"><path d="M0.8 0.8h14.4v14.4h-14.4z" fill="#c8dcec" stroke="#1c1c1c" stroke-width="1.6" /><path d="M4 3.5h8l1 1v7l-1 1h-8l-1-1v-7z" fill="#f0f4f8" stroke="#1c1c1c" stroke-width="1" stroke-dasharray="1 1"/><path d="M0 0h3v3h-3z M13 13h3v3h-3z" fill="#0000a8"/></g><rect x="6" y="78" width="2" height="2" fill="#b4b4b4"/><rect x="6" y="82" width="2" height="2" fill="#b4b4b4"/><rect x="6" y="86" width="2" height="2" fill="#b4b4b4"/><rect x="6" y="90" width="2" height="2" fill="#b4b4b4"/><rect x="414" y="78" width="2" height="2" fill="#b4b4b4"/><rect x="414" y="82" width="2" height="2" fill="#b4b4b4"/><rect x="414" y="86" width="2" height="2" fill="#b4b4b4"/><rect x="414" y="90" width="2" height="2" fill="#b4b4b4"/><rect x="470" y="78" width="2" height="2" fill="#b4b4b4"/><rect x="470" y="82" width="2" height="2" fill="#b4b4b4"/><rect x="470" y="86" width="2" height="2" fill="#b4b4b4"/><rect x="470" y="90" width="2" height="2" fill="#b4b4b4"/><rect x="604" y="78" width="2" height="2" fill="#b4b4b4"/><rect x="604" y="82" width="2" height="2" fill="#b4b4b4"/><rect x="604" y="86" width="2" height="2" fill="#b4b4b4"/><rect x="604" y="90" width="2" height="2" fill="#b4b4b4"/><rect x="678" y="78" width="2" height="2" fill="#b4b4b4"/><rect x="678" y="82" width="2" height="2" fill="#b4b4b4"/><rect x="678" y="86" width="2" height="2" fill="#b4b4b4"/><rect x="678" y="90" width="2" height="2" fill="#b4b4b4"/><rect x="976" y="78" width="2" height="2" fill="#b4b4b4"/><rect x="976" y="82" width="2" height="2" fill="#b4b4b4"/><rect x="976" y="86" width="2" height="2" fill="#b4b4b4"/><rect x="976" y="90" width="2" height="2" fill="#b4b4b4"/><rect x="1164" y="78" width="2" height="2" fill="#b4b4b4"/><rect x="1164" y="82" width="2" height="2" fill="#b4b4b4"/><rect x="1164" y="86" width="2" height="2" fill="#b4b4b4"/><rect x="1164" y="90" width="2" height="2" fill="#b4b4b4"/><rect x="499" y="76" width="1" height="18" fill="#c8c8c8"/><rect x="500" y="76" width="1" height="18" fill="#ffffff"/><rect x="549" y="76" width="1" height="18" fill="#c8c8c8"/><rect x="550" y="76" width="1" height="18" fill="#ffffff"/><g transform="translate(12,77)"><path d="M0.5 1.5h12.5l2.5 2.5v9.5h-15z" fill="#eef2f8" stroke="#303850" stroke-width="1.3" /><path d="M12.5 1.5v3h3z" fill="#fff"/><path d="M12.5 1.5v3h3" fill="none" stroke="#303850" stroke-width="0.9" /></g><g transform="translate(35,77)"><path d="M1 3 L4 2 L6 4 L8 14 L3 14z" fill="#d8c070"/><path d="M6 3 L11 1 L13 3 L8 6z" fill="#fff"/><path d="M6 3 L11 1 L13 3" fill="none" stroke="#404020" stroke-width="1" /><path d="M5 6 L14 4 L14 12 L7 14z" fill="#d8c030"/><path d="M1 3 L4 2 L6 4 L14 4 V12 L7 14 H3z" fill="none" stroke="#505020" stroke-width="1" /><path d="M9 11 Q10 14 13 14" fill="none" stroke="#0000a8" stroke-width="1.5" /><path d="M12 12 L15 14 L12 16z" fill="#102060"/></g><g transform="translate(57,77)"><path d="M1.5 1.5h13v13h-13z" fill="#8aaad8" stroke="#304870" stroke-width="1.4" /><path d="M4 2h8v5h-8z" fill="#eef2f8"/><path d="M4 10h8v5h-8z" fill="#304870"/><path d="M5 11h2v3h-2z" fill="#c8d8f0"/></g><g transform="translate(79,77)"><path d="M5 1.5h6l2 2v4h-8z" fill="#fff" stroke="#304870" stroke-width="1" /><path d="M1.5 8h13v5h-13z" fill="#8aa8d0" stroke="#304870" stroke-width="1.3" /><path d="M4 12h8v3h-8z" fill="#fff" stroke="#304870" stroke-width="1" /></g><g transform="translate(101,77)"><path d="M1.5 1.5h10l3 3v10h-13z" fill="#eef2f8" stroke="#303850" stroke-width="1.3" /><circle cx="9.5" cy="9" r="3.5" fill="#fff" stroke="#304860" stroke-width="1.2"/><path d="M7 11.5 L3.5 15" fill="none" stroke="#304860" stroke-width="1.6" /></g><g transform="translate(124,77)"><circle cx="8" cy="8" r="5.5" fill="#d8d8d8" stroke="#707070" stroke-width="1.3" stroke-dasharray="1.5 1"/><circle cx="8" cy="8" r="2.5" fill="#f4f4f4" stroke="#606060" stroke-width="1"/><path d="M8 0.5v3M8 12.5v3M0.5 8h3M12.5 8h3M2.5 2.5l2 2M11.5 11.5l2 2M13.5 2.5l-2 2M2.5 13.5l2-2" fill="none" stroke="#808080" stroke-width="1.3" /></g><g transform="translate(145,77)"><path d="M1 8 L12 4 M1 8 L12 12" fill="none" stroke="#b0b0b0" stroke-width="1.4" /><circle cx="13" cy="4" r="2.5" fill="none" stroke="#b0b0b0" stroke-width="1.2"/><circle cx="13" cy="12" r="2.5" fill="none" stroke="#b0b0b0" stroke-width="1.2"/></g><g transform="translate(167,77)"><path d="M1.5 1.5h9l2 2v8h-11z" fill="#f4f4f4" stroke="#b0b0b0" stroke-width="1" /><path d="M4.5 4.5h9l2 2v8h-11z" fill="#f0f0f0" stroke="#b0b0b0" stroke-width="1" /></g><g transform="translate(189,77)"><path d="M1 3h10v11h-10z" fill="#b89838"/><path d="M1 3h10v11h-10z" fill="none" stroke="#605020" stroke-width="1" /><path d="M6.5 6.5h6l2 2v6.5h-8z" fill="#f4f8fc" stroke="#303850" stroke-width="1.2" /><path d="M3 1h6v3h-6z" fill="#808080"/></g><g transform="translate(213,77)"><path d="M2 15 L14 2" fill="none" stroke="#1c1c1c" stroke-width="2.4" /><path d="M2.5 14.5 L8 8" fill="none" stroke="#707060" stroke-width="1" /><path d="M1 16 L3 12 L5 14z" fill="#202020"/></g><g transform="translate(234,77)"><path d="M5.5 1.5h8v9h-8z" fill="#fff" stroke="#0000a8" stroke-width="1.3" /><path d="M1.5 6.5h9v7h-9z" fill="#f0e030" stroke="#0000a8" stroke-width="1.3" /><path d="M3.5 9.5h9v5h-9z" fill="#f8f040" stroke="#303080" stroke-width="1" /></g><g transform="translate(256,77)"><path d="M3 7 A6 6 0 1 1 9 15" fill="none" stroke="#b0b0b0" stroke-width="2.6" /><path d="M0 6 L6 2 L6 10z" fill="#b0b0b0"/></g><g transform="translate(277,77)"><path d="M13 7 A6 6 0 1 0 7 15" fill="none" stroke="#b0b0b0" stroke-width="2.6" /><path d="M16 6 L10 2 L10 10z" fill="#b0b0b0"/></g><g transform="translate(301,77)"><path d="M9.5 9.5 L14.5 14.5" fill="none" stroke="#7a6a28" stroke-width="2.6" /><circle cx="6.5" cy="6.5" r="5.3" fill="#9cc4d8" stroke="#4a5a68" stroke-width="1.6"/><path d="M4 4h5v5h-5z" fill="#7ad0c8" stroke="#1a7a7a" stroke-width="1.2" /><path d="M13 16h3v-3z" fill="#000"/></g><g transform="translate(322,77)"><path d="M9.5 9.5 L14.5 14.5" fill="none" stroke="#7a6a28" stroke-width="2.6" /><circle cx="6.5" cy="6.5" r="5.3" fill="#8eb4dc" stroke="#3a4a60" stroke-width="1.6"/><path d="M4 8 L8.5 3.5 M5 4h4v4" fill="none" stroke="#1a3a70" stroke-width="1.6" /></g><g transform="translate(343,77)"><path d="M1 1h3v3h-3z" fill="#e02020"/><path d="M4 1h3v3h-3z" fill="#20a020"/><path d="M7 1h3v3h-3z" fill="#2020e0"/><path d="M10 1h3v3h-3z" fill="#e020e0"/><path d="M3 6h10l2 2v3h-12z" fill="#fff" stroke="#1c1c1c" stroke-width="1" /><text x="1" y="16" font-family="Liberation Sans" font-size="7" font-weight="bold" fill="#1c1c1c">≡</text><text x="9" y="16" font-family="Liberation Sans" font-size="8" font-weight="bold" fill="#0000a8">A</text></g><g transform="translate(365,77)"><path d="M2.5 0.5h11v15h-11z" fill="#404040" stroke="#303030" stroke-width="1" /><path d="M4 2h8v3h-8z" fill="#a0c0a0"/><path d="M4 6h2v2h-2z" fill="#e0e0e0"/><path d="M4 9h2v2h-2z" fill="#e0e0e0"/><path d="M4 12h2v2h-2z" fill="#e0e0e0"/><path d="M7 6h2v2h-2z" fill="#e0e0e0"/><path d="M7 9h2v2h-2z" fill="#e0e0e0"/><path d="M7 12h2v2h-2z" fill="#e0e0e0"/><path d="M10 6h2v2h-2z" fill="#e0e0e0"/><path d="M10 9h2v2h-2z" fill="#e0e0e0"/><path d="M10 12h2v2h-2z" fill="#e0e0e0"/></g><g transform="translate(388,77)"><path d="M1.5 1.5h13v13h-13z" fill="#4a7ab8" stroke="#203060" stroke-width="1" /><text x="4" y="13" font-family="Liberation Sans" font-size="12" font-weight="bold" fill="#fff">?</text></g><g transform="translate(421,77)"><path d="M0.5 8.5h15" fill="none" stroke="#1c1c1c" stroke-width="1.2" /><path d="M9 14 L13 3" fill="none" stroke="#0000a8" stroke-width="1.5" /></g><g transform="translate(443,77)"><path d="M6 15 A6.5 6.5 0 1 1 13 5.5" fill="none" stroke="#d02020" stroke-width="1.4" /><path d="M8 14 A 6 6 0 0 0 13.5 6" fill="none" stroke="#1c1c1c" stroke-width="1.2" /><path d="M6 10 L14 1" fill="none" stroke="#1c1c1c" stroke-width="1.2" /></g><g transform="translate(477,77)"><path d="M8 1.5 L14.5 6.5 L12 14.5 H4 L1.5 6.5z" fill="#dce8f0" stroke="#1c1c1c" stroke-width="1.4" /></g><g transform="translate(506,77)"><path d="M5 1 H11 L15 5 V11 L11 15 H5 L1 11 V5z" fill="#d8dce0" stroke="#1c1c1c" stroke-width="1.2" /><circle cx="8" cy="8" r="4.3" fill="#f4f4f4" stroke="#1c1c1c" stroke-width="1.2"/><circle cx="8" cy="8" r="2" fill="#fff" stroke="#0000a8" stroke-width="1.2"/><rect x="0.5" y="0.5" width="3" height="3" fill="#e8e8ff" stroke="#0000a8" stroke-width="1"/></g><g transform="translate(527,77)"><path d="M1.5 4.5 L4.5 1.5 H10.5 L14.5 5.5 V11.5 L11.5 14.5 H5.5 L1.5 10.5z" fill="#fff" stroke="#000070" stroke-width="3" /><path d="M5 7 Q5 5 8 5 Q11 5 11 8 Q11 11 8 11 Q5 11 5 9z" fill="#fff" stroke="#000070" stroke-width="1.3" /><rect x="0.7" y="1.7" width="2.6" height="2.6" fill="#fff" stroke="#000080" stroke-width="1"/><rect x="5.2" y="0.7" width="2.6" height="2.6" fill="#fff" stroke="#000080" stroke-width="1"/><rect x="0.7" y="6.7" width="2.6" height="2.6" fill="#fff" stroke="#000080" stroke-width="1"/><rect x="12.7" y="7.7" width="2.6" height="2.6" fill="#fff" stroke="#000080" stroke-width="1"/><rect x="5.2" y="12.7" width="2.6" height="2.6" fill="#fff" stroke="#000080" stroke-width="1"/><rect x="12.7" y="12.7" width="2.6" height="2.6" fill="#fff" stroke="#000080" stroke-width="1"/></g><g transform="translate(555,77)"><circle cx="8" cy="8" r="7" fill="none" stroke="#1c1c1c" stroke-width="1.2" stroke-dasharray="1.3 1"/><circle cx="8" cy="8" r="4.5" fill="none" stroke="#1c1c1c" stroke-width="1" stroke-dasharray="1.2 1"/><circle cx="8" cy="8" r="2" fill="none" stroke="#0000a8" stroke-width="1.2"/></g><g transform="translate(577,77)"><path d="M1.5 4.5 L4.5 1.5 H10.5 L14.5 5.5 V11.5 L11.5 14.5 H5.5 L1.5 10.5z" fill="#fff" stroke="#000070" stroke-width="3" /><path d="M5 7 Q5 5 8 5 Q11 5 11 8 Q11 11 8 11 Q5 11 5 9z" fill="#fff" stroke="#000070" stroke-width="1.3" /><rect x="0.7" y="1.7" width="2.6" height="2.6" fill="#fff" stroke="#000080" stroke-width="1"/><rect x="5.2" y="0.7" width="2.6" height="2.6" fill="#fff" stroke="#000080" stroke-width="1"/><rect x="0.7" y="6.7" width="2.6" height="2.6" fill="#fff" stroke="#000080" stroke-width="1"/><rect x="12.7" y="7.7" width="2.6" height="2.6" fill="#fff" stroke="#000080" stroke-width="1"/><rect x="5.2" y="12.7" width="2.6" height="2.6" fill="#fff" stroke="#000080" stroke-width="1"/><rect x="12.7" y="12.7" width="2.6" height="2.6" fill="#fff" stroke="#000080" stroke-width="1"/></g><g transform="translate(611,77)"><path d="M3 3h10v10h-10z" fill="none" stroke="#b0b0b0" stroke-width="1.2" /><path d="M6 6h8v8h-8z" fill="none" stroke="#b0b0b0" stroke-width="1" /><path d="M1 1h3v3h-3z M12 1h3v3h-3z M1 12h3v3h-3z M12 12h3v3h-3z" fill="#a0a0a0"/></g><g transform="translate(633,77)"><path d="M2 3h8v7h-8z" fill="#e8e8e8" stroke="#b0b0b0" stroke-width="1" /><path d="M5 6h9v8h-9z" fill="#d8d8d8" stroke="#b0b0b0" stroke-width="1" /></g><g transform="translate(685,77)"><path d="M1 1.5h15M1 15.5h15" fill="none" stroke="#1c1c1c" stroke-width="1.2" opacity="0.8"/><path d="M8.5 3v11M3 8.5h11" fill="none" stroke="#1c1c1c" stroke-width="1.4" /><path d="M6.5 5 L8.5 3 L10.5 5 M6.5 12 L8.5 14 L10.5 12 M5 6.5 L3 8.5 L5 10.5 M12 6.5 L14 8.5 L12 10.5" fill="none" stroke="#1c1c1c" stroke-width="1.2" /></g><g transform="translate(707,77)"><path d="M0.5 7.5 L7 1 L15.5 9.5 L9 16 Z" fill="none" stroke="#1c1c1c" stroke-width="1" /><path d="M5.5 3.5 L12 10" fill="none" stroke="#1c1c1c" stroke-width="1.4" /><path d="M4.5 2.5 L8 3 L5 6z M13 11 L12.5 7.5 L9.5 10.5z" fill="#000"/></g><g transform="translate(729,77)"><path d="M0.5 6.5 L6.5 0.5 L16 10 L10 16 Z" fill="none" stroke="#1c1c1c" stroke-width="1" stroke-dasharray="1.5 1"/><path d="M6 1.5 L15 10.5" fill="none" stroke="#1c1c1c" stroke-width="1.4" /><path d="M5 1 L9 1.3 L6 4.5z M16 11.5 L15.5 7.5 L12.5 10.5z" fill="#000"/></g><g transform="translate(751,77)"><path d="M0.5 2.5h3M0.5 8.5h3M0.5 14.5h4" fill="none" stroke="#3030a0" stroke-width="1" stroke-dasharray="1.5 1"/><path d="M6.5 1.5h8v14h-6v-8h-2z" fill="#d8d8d8" stroke="#1c1c1c" stroke-width="1.6" /></g><g transform="translate(773,77)"><path d="M1 2.5h14M1 7.5h12M1 12.5h10M2 1v14M14 1v6" fill="none" stroke="#b0b0b0" stroke-width="1" /></g><g transform="translate(795,77)"><path d="M1 4.5h14M2 2v13M7 2v8M12 2v13" fill="none" stroke="#b0b0b0" stroke-width="1" /></g><g transform="translate(817,77)"><path d="M1 9.5h14M2 2v9M8 2v9M14 2v9" fill="none" stroke="#b0b0b0" stroke-width="1" /><path d="M6 13h2v2h-2zM12 13h2v2h-2z" fill="#b0b0b0" stroke="#b0b0b0" stroke-width="1" /></g><g transform="translate(840,77)"><path d="M1.5 1v14.5h14" fill="none" stroke="#1c1c1c" stroke-width="1.5" /><path d="M2.5 3 Q10 3.5 11 13" fill="none" stroke="#1c1c1c" stroke-width="1.1" /><path d="M1.5 3 L5 1 L5 5z M11 15 L9 11 L13 11z" fill="#000"/><text x="9" y="7" font-family="Liberation Sans" font-size="7.5" font-weight="bold" fill="#0000a8">A</text></g><g transform="translate(862,77)"><circle cx="6" cy="10" r="5" fill="none" stroke="#1c1c1c" stroke-width="1.3"/><path d="M6 10 L11 5" fill="none" stroke="#1c1c1c" stroke-width="1" /><text x="10" y="6.5" font-family="Liberation Sans" font-size="7" font-weight="bold" fill="#0000a8">R</text></g><g transform="translate(883,77)"><circle cx="6" cy="10" r="5" fill="none" stroke="#1c1c1c" stroke-width="1.3"/><path d="M2.5 13.5 L9.5 6.5" fill="none" stroke="#c03030" stroke-width="1.2" /><text x="10" y="6.5" font-family="Liberation Sans" font-size="7" font-weight="bold" fill="#0000a8">D</text></g><g transform="translate(905,77)"><path d="M3 13 L7 9 M3 13v-3M3 13h3" fill="none" stroke="#1c1c1c" stroke-width="1.4" /><path d="M6 8.5h5l4 -6h-9z" fill="none" stroke="#1c1c1c" stroke-width="1.4" /></g><g transform="translate(929,77)"><ellipse cx="8" cy="7.5" rx="4" ry="5.5" fill="none" stroke="#1c1c1c" stroke-width="1.5"/><path d="M8 11 L11 15" fill="none" stroke="#1c1c1c" stroke-width="1.5" /></g><g transform="translate(949,77)"><path d="M1.5 14 L14 1.5" fill="none" stroke="#1c1c1c" stroke-width="1.3" /><path d="M1.5 1v6M1 5h5M9 14.5h6M12 10v6" fill="none" stroke="#1c1c1c" stroke-width="1" /><path d="M0 3 L3 3 L1.5 0.5z M14 13 L14 16 L16.5 14.5z" fill="#000"/><rect x="0.75" y="11.75" width="2.5" height="2.5" fill="#000" stroke="#1c1c1c" stroke-width="1"/><rect x="12.75" y="0.75" width="2.5" height="2.5" fill="#000" stroke="#1c1c1c" stroke-width="1"/></g><g transform="translate(985,77)"><path d="M3 13 L13 3" fill="none" stroke="#1c1c1c" stroke-width="1.4" /><rect x="1.5" y="11.5" width="3" height="3" fill="#e8e8ff" stroke="#0000a8" stroke-width="1"/><rect x="11.5" y="1.5" width="3" height="3" fill="#e8e8ff" stroke="#0000a8" stroke-width="1"/></g><g transform="translate(1007,77)"><path d="M1 13 L9 6 L15 1 M6 8.5 L12 13" fill="none" stroke="#1c1c1c" stroke-width="1.4" /><rect x="4.5" y="7.0" width="3" height="3" fill="#e8e8ff" stroke="#0000a8" stroke-width="1"/><rect x="10.5" y="11.5" width="3" height="3" fill="#e8e8ff" stroke="#0000a8" stroke-width="1"/></g><g transform="translate(1028,77)"><path d="M1 10 L11 1 M5 15 L15 6" fill="none" stroke="#1c1c1c" stroke-width="1.4" /><rect x="3.5" y="4.0" width="3" height="3" fill="#e8e8ff" stroke="#0000a8" stroke-width="1"/><rect x="9.5" y="8.5" width="3" height="3" fill="#e8e8ff" stroke="#0000a8" stroke-width="1"/></g><g transform="translate(1049,77)"><circle cx="7" cy="9.5" r="5.5" fill="none" stroke="#1c1c1c" stroke-width="1.3"/><path d="M2 1 L15 14" fill="none" stroke="#1c1c1c" stroke-width="1.3" /><rect x="7.5" y="4.5" width="3" height="3" fill="#e8e8ff" stroke="#0000a8" stroke-width="1"/></g><g transform="translate(1071,77)"><path d="M1 1 Q7 3 5 15" fill="none" stroke="#1c1c1c" stroke-width="1.4" /><path d="M4 3 L14 12" fill="none" stroke="#1c1c1c" stroke-width="1.3" /><rect x="4.0" y="3.0" width="3" height="3" fill="#ffe0e0" stroke="#d02020" stroke-width="1"/><rect x="11.5" y="10.5" width="3" height="3" fill="#e8e8ff" stroke="#0000a8" stroke-width="1"/></g><g transform="translate(1093,77)"><path d="M1 1 Q9 4 1 15" fill="none" stroke="#1c1c1c" stroke-width="1.4" /><path d="M5 4 L15 14" fill="none" stroke="#1c1c1c" stroke-width="1.3" /><rect x="4.0" y="3.0" width="3" height="3" fill="#e8e8ff" stroke="#0000a8" stroke-width="1"/><rect x="12.5" y="11.5" width="3" height="3" fill="#ffe0e0" stroke="#d02020" stroke-width="1"/></g><g transform="translate(1115,77)"><path d="M1 2 Q6 2 7 7 M5 4 L13 12 M10 8 Q14 9 14 15" fill="none" stroke="#b0b0b0" stroke-width="1.3" /><path d="M3 6h3v3h-3z M10 10h3v3h-3z" fill="none" stroke="#b0b0b0" stroke-width="1" /></g><g transform="translate(1137,77)"><path d="M8 2 V14 M2 9 L8 14 L14 9" fill="none" stroke="#0000a8" stroke-width="1.2" /><rect x="6.5" y="0.5" width="3" height="3" fill="#e8e8ff" stroke="#0000a8" stroke-width="1"/><rect x="0.5" y="6.5" width="3" height="3" fill="#e8e8ff" stroke="#0000a8" stroke-width="1"/><rect x="12.5" y="6.5" width="3" height="3" fill="#e8e8ff" stroke="#0000a8" stroke-width="1"/><rect x="6.5" y="12.5" width="3" height="3" fill="#e8e8ff" stroke="#0000a8" stroke-width="1"/></g><g transform="translate(1172,77)"><path d="M2 15 C1 8 5 5 8 8.5 C10.5 11.5 14 10 14 2" fill="none" stroke="#1c1c1c" stroke-width="1.6" /></g><g transform="translate(1194,77)"><path d="M2 15 C1 8 5 5 8 8.5 C10.5 11.5 14 10 14 2" fill="none" stroke="#1c1c1c" stroke-width="1.5" /><rect x="2.5" y="1.5" width="3" height="3" fill="#e8e8ff" stroke="#0000a8" stroke-width="1"/><rect x="9.5" y="12.5" width="3" height="3" fill="#e8e8ff" stroke="#0000a8" stroke-width="1"/></g><g transform="translate(1215,77)"><path d="M1 14 L4 3 Q7 1 9 2 L14 13" fill="none" stroke="#1c1c1c" stroke-width="1.4" /><rect x="-0.5" y="12.5" width="3" height="3" fill="#e8e8ff" stroke="#0000a8" stroke-width="1"/><rect x="2.5" y="1.5" width="3" height="3" fill="#e8e8ff" stroke="#0000a8" stroke-width="1"/><rect x="7.5" y="1.5" width="3" height="3" fill="#e8e8ff" stroke="#0000a8" stroke-width="1"/><rect x="12.5" y="11.5" width="3" height="3" fill="#e8e8ff" stroke="#0000a8" stroke-width="1"/></g><g transform="translate(1238,77)"><path d="M1 12 C1 2 14 1 14 8 C14 13 6 13 7 8 C8 5 11 5 11 7" fill="none" stroke="#1c1c1c" stroke-width="1.4" /><rect x="-0.5" y="10.5" width="3" height="3" fill="#e8e8ff" stroke="#0000a8" stroke-width="1"/><rect x="8.5" y="4.5" width="3" height="3" fill="#e8e8ff" stroke="#0000a8" stroke-width="1"/></g><g transform="translate(1259,77)"><path d="M1 14 L8 6 L15 1" fill="none" stroke="#b0b0b0" stroke-width="1" stroke-dasharray="1.5 1"/><rect x="-0.5" y="9.5" width="3" height="3" fill="#f0f0f0" stroke="#b0b0b0" stroke-width="1"/><rect x="4.5" y="-0.5" width="3" height="3" fill="#f0f0f0" stroke="#b0b0b0" stroke-width="1"/><rect x="8.5" y="11.5" width="3" height="3" fill="#f0f0f0" stroke="#b0b0b0" stroke-width="1"/><rect x="13.5" y="0.5" width="3" height="3" fill="#f0f0f0" stroke="#b0b0b0" stroke-width="1"/></g><rect x="6" y="104" width="2" height="2" fill="#b4b4b4"/><rect x="6" y="108" width="2" height="2" fill="#b4b4b4"/><rect x="6" y="112" width="2" height="2" fill="#b4b4b4"/><rect x="6" y="116" width="2" height="2" fill="#b4b4b4"/><rect x="40" y="104" width="2" height="2" fill="#b4b4b4"/><rect x="40" y="108" width="2" height="2" fill="#b4b4b4"/><rect x="40" y="112" width="2" height="2" fill="#b4b4b4"/><rect x="40" y="116" width="2" height="2" fill="#b4b4b4"/><rect x="92" y="104" width="2" height="2" fill="#b4b4b4"/><rect x="92" y="108" width="2" height="2" fill="#b4b4b4"/><rect x="92" y="112" width="2" height="2" fill="#b4b4b4"/><rect x="92" y="116" width="2" height="2" fill="#b4b4b4"/><rect x="352" y="104" width="2" height="2" fill="#b4b4b4"/><rect x="352" y="108" width="2" height="2" fill="#b4b4b4"/><rect x="352" y="112" width="2" height="2" fill="#b4b4b4"/><rect x="352" y="116" width="2" height="2" fill="#b4b4b4"/><rect x="889" y="104" width="2" height="2" fill="#b4b4b4"/><rect x="889" y="108" width="2" height="2" fill="#b4b4b4"/><rect x="889" y="112" width="2" height="2" fill="#b4b4b4"/><rect x="889" y="116" width="2" height="2" fill="#b4b4b4"/><rect x="253" y="102" width="1" height="17" fill="#c8c8c8"/><rect x="254" y="102" width="1" height="17" fill="#ffffff"/><rect x="918" y="102" width="1" height="17" fill="#c8c8c8"/><rect x="919" y="102" width="1" height="17" fill="#ffffff"/><rect x="1079" y="102" width="1" height="17" fill="#c8c8c8"/><rect x="1080" y="102" width="1" height="17" fill="#ffffff"/><rect x="1150" y="102" width="1" height="17" fill="#c8c8c8"/><rect x="1151" y="102" width="1" height="17" fill="#ffffff"/><g transform="translate(14,103)"><circle cx="8" cy="8" r="5.5" fill="#d8d8d8" stroke="#707070" stroke-width="1.3" stroke-dasharray="1.5 1"/><circle cx="8" cy="8" r="2.5" fill="#f4f4f4" stroke="#606060" stroke-width="1"/><path d="M8 0.5v3M8 12.5v3M0.5 8h3M12.5 8h3M2.5 2.5l2 2M11.5 11.5l2 2M13.5 2.5l-2 2M2.5 13.5l2-2" fill="none" stroke="#808080" stroke-width="1.3" /></g><g transform="translate(47,103)"><path d="M1 9 L8 13 L15 9 L15 11 L8 15 L1 11z" fill="#48a048"/><path d="M1 7 L8 11 L15 7 L15 9 L8 13 L1 9z" fill="#e8e040"/><path d="M1 5 L8 9 L15 5 L8 2z" fill="#60c060"/><path d="M1 5 L8 9 L15 5 L8 2z M1 5v6l7 4l7-4v-6" fill="none" stroke="#204020" stroke-width="1" /><path d="M8 6 Q10 1 14 2 L13 0 M14 2 L12 4" fill="none" stroke="#303030" stroke-width="1.2" /></g><g transform="translate(99,103)"><path d="M0.5 1.5h3v3h-3z" fill="#a4a4a4"/><path d="M6.5 1.5h3v3h-3z" fill="#a4a4a4"/><path d="M12.5 1.5h3v3h-3z" fill="#a4a4a4"/><path d="M5 15V9M3 11L5 9L7 11M11 15V9M9 11L11 9L13 11" fill="none" stroke="#909090" stroke-width="1" /></g><g transform="translate(121,103)"><path d="M0.5 6.5h3v3h-3z" fill="#a4a4a4"/><path d="M6.5 6.5h3v3h-3z" fill="#a4a4a4"/><path d="M12.5 6.5h3v3h-3z" fill="#a4a4a4"/><path d="M8 1v4M6.5 3.5L8 5L9.5 3.5M8 15v-4M6.5 12.5L8 11L9.5 12.5" fill="none" stroke="#909090" stroke-width="1" /></g><g transform="translate(144,103)"><path d="M0.5 12.5h3v3h-3z" fill="#a4a4a4"/><path d="M6.5 12.5h3v3h-3z" fill="#a4a4a4"/><path d="M12.5 12.5h3v3h-3z" fill="#a4a4a4"/><path d="M5 1v7M3 6L5 8L7 6M11 1v7M9 6L11 8L13 6" fill="none" stroke="#909090" stroke-width="1" /></g><g transform="translate(165,103)"><path d="M0.5 0.5h3v3h-3z" fill="#a4a4a4"/><path d="M0.5 6.5h3v3h-3z" fill="#a4a4a4"/><path d="M0.5 12.5h3v3h-3z" fill="#a4a4a4"/><path d="M15 5h-8M9 3L7 5L9 7M15 11h-8M9 9L7 11L9 13" fill="none" stroke="#909090" stroke-width="1" /></g><g transform="translate(187,103)"><path d="M6.5 0.5h3v3h-3z" fill="#a4a4a4"/><path d="M6.5 6.5h3v3h-3z" fill="#a4a4a4"/><path d="M6.5 12.5h3v3h-3z" fill="#a4a4a4"/><path d="M1 5h5M4 3L6 5L4 7M15 11h-5M12 9L10 11L12 13" fill="none" stroke="#909090" stroke-width="1" /></g><g transform="translate(208,103)"><path d="M12.5 0.5h3v3h-3z" fill="#a4a4a4"/><path d="M12.5 6.5h3v3h-3z" fill="#a4a4a4"/><path d="M12.5 12.5h3v3h-3z" fill="#a4a4a4"/><path d="M1 5h8M7 3L9 5L7 7M1 11h8M7 9L9 11L7 13" fill="none" stroke="#909090" stroke-width="1" /></g><g transform="translate(231,103)"><path d="M1.5 11.5h3v3h-3z" fill="#a4a4a4"/><path d="M6.5 6.5h3v3h-3z" fill="#a4a4a4"/><path d="M11.5 1.5h3v3h-3z" fill="#a4a4a4"/><path d="M1 1 L5 5M5 2v3h-3M15 15 L11 11M11 14v-3h3" fill="none" stroke="#909090" stroke-width="1" /></g><g transform="translate(258,103)"><path d="M1.5 1.5h8v8h-8z" fill="#d8d8d8" stroke="#a0a0a0" stroke-width="1.2" /><path d="M6.5 6.5h8v8h-8z" fill="#c0c0c0" stroke="#a0a0a0" stroke-width="1.2" /></g><g transform="translate(281,103)"><path d="M1.5 1.5h8v8h-8z" fill="#c8c8c8" stroke="#a0a0a0" stroke-width="1.2" /><path d="M6.5 6.5h8v8h-8z" fill="#b8b8b8" stroke="#a0a0a0" stroke-width="1.2" /></g><g transform="translate(303,103)"><path d="M1.5 1.5h8v8h-8z" fill="#e8e8e8" stroke="#a0a0a0" stroke-width="1.2" /><path d="M6.5 6.5h8v8h-8z" fill="#c8c8c8" stroke="#a0a0a0" stroke-width="1.2" /><path d="M3 3 L13 13" fill="none" stroke="#a0a0a0" stroke-width="1" /></g><g transform="translate(326,103)"><path d="M1.5 1.5h8v8h-8z" fill="#f4f4f4" stroke="#a0a0a0" stroke-width="1.2" /><path d="M6.5 6.5h8v8h-8z" fill="#c8c8c8" stroke="#a0a0a0" stroke-width="1.2" /></g><g transform="translate(898,103)"><path d="M2.5 13.5 Q3 4 13.5 2.5" fill="none" stroke="#1c1c1c" stroke-width="1.3" /><rect x="1.0" y="12.0" width="3" height="3" fill="#e8e8ff" stroke="#0000a8" stroke-width="1"/><rect x="3.5" y="5.5" width="3" height="3" fill="#e8e8ff" stroke="#0000a8" stroke-width="1"/><rect x="12.0" y="1.0" width="3" height="3" fill="#e8e8ff" stroke="#0000a8" stroke-width="1"/></g><g transform="translate(925,103)"><path d="M2.5 13.5 Q3 4 13.5 2.5" fill="none" stroke="#1c1c1c" stroke-width="1.3" /><rect x="12.0" y="1.0" width="3" height="3" fill="#e8e8ff" stroke="#0000a8" stroke-width="1"/><rect x="12.0" y="12.0" width="3" height="3" fill="#e8e8ff" stroke="#0000a8" stroke-width="1"/></g><g transform="translate(947,103)"><path d="M2 14 Q3 4 10 2.5" fill="none" stroke="#1c1c1c" stroke-width="1.3" /><path d="M7 14 Q8 9 11 8" fill="none" stroke="#d02020" stroke-width="1.3" /><path d="M2 12.5 L4 14.5 L2 16.5 L0 14.5z" fill="none" stroke="#0000a8" stroke-width="1.1" /><rect x="10.5" y="12.5" width="3" height="3" fill="#e8e8ff" stroke="#0000a8" stroke-width="1"/></g><g transform="translate(969,103)"><path d="M2 14 Q3 4 10 2.5 M5 12 L11 3" fill="none" stroke="#1c1c1c" stroke-width="1.3" /><path d="M2 12.5 L4 14.5 L2 16.5 L0 14.5z" fill="none" stroke="#0000a8" stroke-width="1.1" /><rect x="11.5" y="12.5" width="3" height="3" fill="#e8e8ff" stroke="#0000a8" stroke-width="1"/></g><g transform="translate(991,103)"><path d="M2 14 Q3 4 13 2.5" fill="none" stroke="#1c1c1c" stroke-width="1.3" /><path d="M7 14 Q8 9 11 8 V14z" fill="none" stroke="#a06030" stroke-width="1" /><path d="M2 12.5 L4 14.5 L2 16.5 L0 14.5z" fill="none" stroke="#0000a8" stroke-width="1.1" /><rect x="11.5" y="1.0" width="3" height="3" fill="#e8e8ff" stroke="#0000a8" stroke-width="1"/></g><g transform="translate(1013,103)"><path d="M2 14 V1 M1 3 L2 1 L3 3 M2 14 Q4 3 13 2.5" fill="none" stroke="#1c1c1c" stroke-width="1.3" /><path d="M2 12.5 L4 14.5 L2 16.5 L0 14.5z" fill="none" stroke="#0000a8" stroke-width="1.1" /><rect x="11.5" y="1.0" width="3" height="3" fill="#e8e8ff" stroke="#0000a8" stroke-width="1"/></g><g transform="translate(1035,103)"><path d="M2 14 Q3 4 13 2.5 M12 5 V15" fill="none" stroke="#3a1a1a" stroke-width="1.3" /><path d="M2 12.5 L4 14.5 L2 16.5 L0 14.5z" fill="none" stroke="#0000a8" stroke-width="1.1" /><rect x="11.5" y="1.0" width="3" height="3" fill="#e8e8ff" stroke="#0000a8" stroke-width="1"/></g><g transform="translate(1058,103)"><text x="0" y="7" font-family="Liberation Sans" font-size="7" font-weight="normal" fill="#1c1c1c">1</text><text x="0" y="15" font-family="Liberation Sans" font-size="7" font-weight="normal" fill="#1c1c1c">2</text><text x="6" y="11" font-family="Liberation Sans" font-size="7" font-weight="normal" fill="#1c1c1c">3</text><path d="M6 1.5 Q15 2 15 8 Q15 14 6 14.5" fill="none" stroke="#1c1c1c" stroke-width="1" /><rect x="4.5" y="0.0" width="3" height="3" fill="#e8e8ff" stroke="#0000a8" stroke-width="1"/><rect x="4.5" y="13.0" width="3" height="3" fill="#e8e8ff" stroke="#0000a8" stroke-width="1"/><path d="M12 6 L14 8 L12 10" fill="none" stroke="#0000a8" stroke-width="1" /></g><g transform="translate(1085,103)"><path d="M2.5 13.5 Q3 4 13.5 2.5" fill="none" stroke="#1c1c1c" stroke-width="1.3" /><path d="M13.5 4 V12" fill="none" stroke="#d02020" stroke-width="1" stroke-dasharray="1 1"/><rect x="12.0" y="1.0" width="3" height="3" fill="#e8e8ff" stroke="#0000a8" stroke-width="1"/><path d="M13.5 12 L15.5 14 L13.5 16 L11.5 14z" fill="none" stroke="#0000a8" stroke-width="1.1" /></g><g transform="translate(1107,103)"><path d="M2 14 Q3 3 10 2.5" fill="none" stroke="#1c1c1c" stroke-width="1.3" /><path d="M6 14 Q7 8 11 8" fill="none" stroke="#d02020" stroke-width="1.2" /><rect x="0.5" y="12.5" width="3" height="3" fill="#e8e8ff" stroke="#0000a8" stroke-width="1"/><path d="M12 12 L14 14 L12 16 L10 14z" fill="none" stroke="#0000a8" stroke-width="1.1" /></g><g transform="translate(1129,103)"><path d="M2 14 Q3 3 10 2.5 M4 13 L12 4" fill="none" stroke="#1c1c1c" stroke-width="1.3" /><rect x="0.5" y="12.5" width="3" height="3" fill="#e8e8ff" stroke="#0000a8" stroke-width="1"/><path d="M12 12 L14 14 L12 16 L10 14z" fill="none" stroke="#0000a8" stroke-width="1.1" /></g><g transform="translate(1157,103)"><path d="M2.5 14 V9 A6 6 0 0 1 14.5 9 M5 14 V9.5 A3.5 3.5 0 0 1 12 9.5" fill="none" stroke="#1c1c1c" stroke-width="1.4" /><rect x="1.0" y="12.5" width="3" height="3" fill="#e8e8ff" stroke="#0000a8" stroke-width="1"/><rect x="7.0" y="6.5" width="3" height="3" fill="#e8e8ff" stroke="#0000a8" stroke-width="1"/><rect x="13.0" y="8.0" width="3" height="3" fill="#e8e8ff" stroke="#0000a8" stroke-width="1"/></g><g transform="translate(1178,103)"><path d="M2 13 Q1 3 9 3 Q15 4 15 12" fill="none" stroke="#1c1c1c" stroke-width="1.4" /><path d="M2 13 L14 1" fill="none" stroke="#1c1c1c" stroke-width="1" stroke-dasharray="1 1"/><rect x="0.5" y="11.5" width="3" height="3" fill="#e8e8ff" stroke="#0000a8" stroke-width="1"/><rect x="3.5" y="2.5" width="3" height="3" fill="#e8e8ff" stroke="#0000a8" stroke-width="1"/><rect x="13.5" y="9.5" width="3" height="3" fill="#e8e8ff" stroke="#0000a8" stroke-width="1"/></g><g transform="translate(1200,103)"><path d="M1 14 L14 1" fill="none" stroke="#1c1c1c" stroke-width="1.2" /><path d="M9 6 Q11 8 9 12" fill="none" stroke="#1c1c1c" stroke-width="1" /><path d="M5 4 L11 10" fill="none" stroke="#1c1c1c" stroke-width="1" stroke-dasharray="1 1"/><rect x="10.5" y="6.5" width="3" height="3" fill="#e8e8ff" stroke="#0000a8" stroke-width="1"/><rect x="7.5" y="10.5" width="3" height="3" fill="#e8e8ff" stroke="#0000a8" stroke-width="1"/></g><g transform="translate(1223,103)"><path d="M3 5 A6 6 0 1 0 13 5" fill="none" stroke="#1c1c1c" stroke-width="1.4" /><path d="M1 5 H15" fill="none" stroke="#1c1c1c" stroke-width="1" /><rect x="4.5" y="0.5" width="3" height="3" fill="#e8e8ff" stroke="#0000a8" stroke-width="1"/><rect x="1.5" y="8.5" width="3" height="3" fill="#e8e8ff" stroke="#0000a8" stroke-width="1"/><rect x="10.5" y="9.5" width="3" height="3" fill="#e8e8ff" stroke="#0000a8" stroke-width="1"/><path d="M9 5 Q12 7 10 10" fill="none" stroke="#1c1c1c" stroke-width="1" stroke-dasharray="1 1"/></g><g transform="translate(1245,103)"><path d="M1 15 L15 1" fill="none" stroke="#1c1c1c" stroke-width="1.2" /><circle cx="8" cy="8" r="3" fill="#c8dcec" stroke="#1c1c1c" stroke-width="1"/><rect x="4.5" y="4.5" width="3" height="3" fill="#e8e8ff" stroke="#0000a8" stroke-width="1"/><rect x="9.5" y="6.5" width="3" height="3" fill="#e8e8ff" stroke="#0000a8" stroke-width="1"/><rect x="4.5" y="10.5" width="3" height="3" fill="#e8e8ff" stroke="#0000a8" stroke-width="1"/><path d="M5 15 L8 11 L11 15" fill="none" stroke="#1c1c1c" stroke-width="1" /></g><rect x="6" y="130" width="2" height="2" fill="#b4b4b4"/><rect x="6" y="134" width="2" height="2" fill="#b4b4b4"/><rect x="6" y="138" width="2" height="2" fill="#b4b4b4"/><rect x="6" y="142" width="2" height="2" fill="#b4b4b4"/><rect x="272" y="130" width="2" height="2" fill="#b4b4b4"/><rect x="272" y="134" width="2" height="2" fill="#b4b4b4"/><rect x="272" y="138" width="2" height="2" fill="#b4b4b4"/><rect x="272" y="142" width="2" height="2" fill="#b4b4b4"/><rect x="526" y="130" width="2" height="2" fill="#b4b4b4"/><rect x="526" y="134" width="2" height="2" fill="#b4b4b4"/><rect x="526" y="138" width="2" height="2" fill="#b4b4b4"/><rect x="526" y="142" width="2" height="2" fill="#b4b4b4"/><rect x="713" y="130" width="2" height="2" fill="#b4b4b4"/><rect x="713" y="134" width="2" height="2" fill="#b4b4b4"/><rect x="713" y="138" width="2" height="2" fill="#b4b4b4"/><rect x="713" y="142" width="2" height="2" fill="#b4b4b4"/><rect x="814" y="130" width="2" height="2" fill="#b4b4b4"/><rect x="814" y="134" width="2" height="2" fill="#b4b4b4"/><rect x="814" y="138" width="2" height="2" fill="#b4b4b4"/><rect x="814" y="142" width="2" height="2" fill="#b4b4b4"/><rect x="914" y="130" width="2" height="2" fill="#b4b4b4"/><rect x="914" y="134" width="2" height="2" fill="#b4b4b4"/><rect x="914" y="138" width="2" height="2" fill="#b4b4b4"/><rect x="914" y="142" width="2" height="2" fill="#b4b4b4"/><rect x="35" y="128" width="1" height="18" fill="#c8c8c8"/><rect x="36" y="128" width="1" height="18" fill="#ffffff"/><rect x="173" y="128" width="1" height="18" fill="#c8c8c8"/><rect x="174" y="128" width="1" height="18" fill="#ffffff"/><rect x="1124" y="128" width="1" height="18" fill="#c8c8c8"/><rect x="1125" y="128" width="1" height="18" fill="#ffffff"/><rect x="1218" y="128" width="1" height="18" fill="#c8c8c8"/><rect x="1219" y="128" width="1" height="18" fill="#ffffff"/><rect x="1246" y="128" width="1" height="18" fill="#c8c8c8"/><rect x="1247" y="128" width="1" height="18" fill="#ffffff"/><g transform="translate(12,131)"><path d="M1.5 0.5h8l3 3v7h-11z" fill="#fff" stroke="#404040" stroke-width="1.1" /><circle cx="6" cy="6" r="3" fill="#b8d0e8" stroke="#506080" stroke-width="1"/><path d="M5.5 7.5h10v8h-10z" fill="#fff" stroke="#101060" stroke-width="1.4" /><path d="M7.5 10.5h6M7.5 12.5h6" fill="none" stroke="#101060" stroke-width="1" /></g><g transform="translate(41,131)"><path d="M1 5 L5 1 H15 V11 L11 15 H1z" fill="#f6fafb"/><path d="M11 5 L15 1 V11 L11 15z" fill="#dde9ee"/><path d="M1 5 L5 1 H15 L11 5z" fill="#40a6bf"/><path d="M5 1 V11 H15 M5 11 L1 15" fill="none" stroke="#5a6a70" stroke-width="0.9" /><path d="M1 5 H11 V15 H1z M1 5 L5 1 H15 V11 L11 15 M11 5 L15 1" fill="none" stroke="#1c1c1c" stroke-width="1.5" /></g><g transform="translate(63,131)"><path d="M1 5 L5 1 H15 V11 L11 15 H1z" fill="#f6fafb"/><path d="M11 5 L15 1 V11 L11 15z" fill="#dde9ee"/><path d="M1 15 L5 11 H15 L11 15z" fill="#40a6bf"/><path d="M5 1 V11 H15 M5 11 L1 15" fill="none" stroke="#5a6a70" stroke-width="0.9" /><path d="M1 5 H11 V15 H1z M1 5 L5 1 H15 V11 L11 15 M11 5 L15 1" fill="none" stroke="#1c1c1c" stroke-width="1.5" /></g><g transform="translate(85,131)"><path d="M1 5 L5 1 H15 V11 L11 15 H1z" fill="#f6fafb"/><path d="M11 5 L15 1 V11 L11 15z" fill="#dde9ee"/><path d="M1 5 L5 1 V11 L1 15z" fill="#40a6bf"/><path d="M5 1 V11 H15 M5 11 L1 15" fill="none" stroke="#5a6a70" stroke-width="0.9" /><path d="M1 5 H11 V15 H1z M1 5 L5 1 H15 V11 L11 15 M11 5 L15 1" fill="none" stroke="#1c1c1c" stroke-width="1.5" /></g><g transform="translate(107,131)"><path d="M1 5 L5 1 H15 V11 L11 15 H1z" fill="#f6fafb"/><path d="M11 5 L15 1 V11 L11 15z" fill="#dde9ee"/><path d="M11 5 L15 1 V11 L11 15z" fill="#40a6bf"/><path d="M5 1 V11 H15 M5 11 L1 15" fill="none" stroke="#5a6a70" stroke-width="0.9" /><path d="M1 5 H11 V15 H1z M1 5 L5 1 H15 V11 L11 15 M11 5 L15 1" fill="none" stroke="#1c1c1c" stroke-width="1.5" /></g><g transform="translate(129,131)"><path d="M1 5 L5 1 H15 V11 L11 15 H1z" fill="#f6fafb"/><path d="M11 5 L15 1 V11 L11 15z" fill="#dde9ee"/><path d="M5 1 V11 H15 M5 11 L1 15" fill="none" stroke="#5a6a70" stroke-width="0.9" /><path d="M1 5 H11 V15 H1z" fill="#40a6bf"/><path d="M1 5 H11 V15 H1z M1 5 L5 1 H15 V11 L11 15 M11 5 L15 1" fill="none" stroke="#1c1c1c" stroke-width="1.5" /></g><g transform="translate(151,131)"><path d="M1 5 L5 1 H15 V11 L11 15 H1z" fill="#f6fafb"/><path d="M11 5 L15 1 V11 L11 15z" fill="#dde9ee"/><path d="M5 1 H15 V11 H5z" fill="#40a6bf"/><path d="M5 1 V11 H15 M5 11 L1 15" fill="none" stroke="#5a6a70" stroke-width="0.9" /><path d="M1 5 H11 V15 H1z M1 5 L5 1 H15 V11 L11 15 M11 5 L15 1" fill="none" stroke="#1c1c1c" stroke-width="1.5" /></g><g transform="translate(179,131)"><path d="M8 1 L14.5 4.5 L8 8 L1.5 4.5z" fill="#f4f8fa"/><path d="M1.5 4.5 L8 8 V15 L1.5 11.5z" fill="#40a6bf"/><path d="M14.5 4.5 L8 8 V15 L14.5 11.5z" fill="#d8e8ee"/><path d="M8 1 V8" fill="none" stroke="#c08080" stroke-width="0.8" opacity=".5"/><path d="M8 1 L14.5 4.5 V11.5 L8 15 L1.5 11.5 V4.5z M1.5 4.5 L8 8 L14.5 4.5" fill="none" stroke="#1c1c1c" stroke-width="1.3" /><path d="M8 8 V16" fill="none" stroke="#1c1c1c" stroke-width="1.3" /><path d="M8 0 V2" fill="none" stroke="#1c1c1c" stroke-width="1" /></g><g transform="translate(201,131)"><path d="M8 1 L14.5 4.5 L8 8 L1.5 4.5z" fill="#f4f8fa"/><path d="M1.5 4.5 L8 8 V15 L1.5 11.5z" fill="#c8dde4"/><path d="M14.5 4.5 L8 8 V15 L14.5 11.5z" fill="#40a6bf"/><path d="M8 1 V8" fill="none" stroke="#c08080" stroke-width="0.8" opacity=".5"/><path d="M8 1 L14.5 4.5 V11.5 L8 15 L1.5 11.5 V4.5z M1.5 4.5 L8 8 L14.5 4.5" fill="none" stroke="#1c1c1c" stroke-width="1.3" /><path d="M8 8 V16" fill="none" stroke="#1c1c1c" stroke-width="1.3" /><path d="M8 0 V2" fill="none" stroke="#1c1c1c" stroke-width="1" /></g><g transform="translate(223,131)"><path d="M8 1 L14.5 4.5 L8 8 L1.5 4.5z" fill="#e8f2f6"/><path d="M1.5 4.5 L8 8 V15 L1.5 11.5z" fill="#d0e4ea"/><path d="M14.5 4.5 L8 8 V15 L14.5 11.5z" fill="#9ccfdc"/><path d="M8 1 V8" fill="none" stroke="#c08080" stroke-width="0.8" opacity=".5"/><path d="M8 1 L14.5 4.5 V11.5 L8 15 L1.5 11.5 V4.5z M1.5 4.5 L8 8 L14.5 4.5" fill="none" stroke="#1c1c1c" stroke-width="1.3" /><path d="M8 8 V16" fill="none" stroke="#1c1c1c" stroke-width="1.3" /><path d="M8 0 V2" fill="none" stroke="#1c1c1c" stroke-width="1" /></g><g transform="translate(245,131)"><path d="M8 1 L14.5 4.5 L8 8 L1.5 4.5z" fill="#40a6bf"/><path d="M1.5 4.5 L8 8 V15 L1.5 11.5z" fill="#d8eaf0"/><path d="M14.5 4.5 L8 8 V15 L14.5 11.5z" fill="#a0d0dc"/><path d="M8 1 V8" fill="none" stroke="#c08080" stroke-width="0.8" opacity=".5"/><path d="M8 1 L14.5 4.5 V11.5 L8 15 L1.5 11.5 V4.5z M1.5 4.5 L8 8 L14.5 4.5" fill="none" stroke="#1c1c1c" stroke-width="1.3" /><path d="M8 8 V16" fill="none" stroke="#1c1c1c" stroke-width="1.3" /><path d="M8 0 V2" fill="none" stroke="#1c1c1c" stroke-width="1" /></g><g transform="translate(278,131)"><path d="M1 15 L15 1" fill="none" stroke="#1c1c1c" stroke-width="1.2" /><path d="M1 16 L2 11.5 L5.5 14.5z M15 0 L10.5 1.5 L13.5 4.5z" fill="#000"/><rect x="6.5" y="6.5" width="3" height="3" fill="#e8e8ff" stroke="#0000a8" stroke-width="1"/></g><g transform="translate(300,131)"><path d="M1 8.5h14" fill="none" stroke="#1c1c1c" stroke-width="1.3" /><path d="M0 8.5 L4 6 V11z M16 8.5 L12 6 V11z" fill="#000"/><rect x="6.5" y="7.0" width="3" height="3" fill="#e8e8ff" stroke="#0000a8" stroke-width="1"/></g><g transform="translate(322,131)"><path d="M8 0.5v15" fill="none" stroke="#1c1c1c" stroke-width="1.3" /><path d="M8 0 L5.5 4 H10.5z M8 16 L5.5 12 H10.5z" fill="#000"/><rect x="6.5" y="6.5" width="3" height="3" fill="#e8e8ff" stroke="#0000a8" stroke-width="1"/></g><g transform="translate(344,131)"><path d="M1 15 L15 1" fill="none" stroke="#1c1c1c" stroke-width="1.2" /><path d="M1 16 L2 11.5 L5.5 14.5z M15 0 L10.5 1.5 L13.5 4.5z" fill="#000"/><rect x="3.5" y="9.5" width="3" height="3" fill="#e8e8ff" stroke="#0000a8" stroke-width="1"/><rect x="8.5" y="4.5" width="3" height="3" fill="#e8e8ff" stroke="#0000a8" stroke-width="1"/></g><g transform="translate(367,131)"><path d="M1 15 L15 1 M7 1 V9" fill="none" stroke="#1c1c1c" stroke-width="1.2" /><path d="M1 16 L2 11.5 L5.5 14.5z M15 0 L10.5 1.5 L13.5 4.5z" fill="#000"/><rect x="5.5" y="0.5" width="3" height="3" fill="#e8e8ff" stroke="#0000a8" stroke-width="1"/><rect x="5.5" y="7.5" width="3" height="3" fill="#e8e8ff" stroke="#0000a8" stroke-width="1"/></g><g transform="translate(389,131)"><path d="M1 13 L13 1" fill="none" stroke="#1c1c1c" stroke-width="1.2" /><path d="M4 16 L15 5" fill="none" stroke="#d02020" stroke-width="1.2" /><path d="M1 14 L2 9.5 L5.5 12.5z M13 0 L8.5 1.5 L11.5 4.5z" fill="#000"/><rect x="4.5" y="6.5" width="3" height="3" fill="#e8e8ff" stroke="#0000a8" stroke-width="1"/><circle cx="10" cy="10" r="1.8" fill="none" stroke="#c02020" stroke-width="1"/></g><g transform="translate(410,131)"><path d="M1 1 L15 15" fill="none" stroke="#1c1c1c" stroke-width="1.2" /><path d="M1 14 L14 1" fill="none" stroke="#d02020" stroke-width="1.2" /><path d="M1 0 L2 4.5 L5.5 1.5z M16 16 L11.5 14.5 L14.5 11.5z" fill="#000"/><circle cx="6" cy="8" r="1.8" fill="#fff" stroke="#c02020" stroke-width="1"/><rect x="9.0" y="9.0" width="3" height="3" fill="#e8e8ff" stroke="#0000a8" stroke-width="1"/></g><g transform="translate(432,131)"><path d="M1 1 L15 15" fill="none" stroke="#b0b0b0" stroke-width="1" /><rect x="0.5" y="12.5" width="3" height="3" fill="#fff" stroke="#1c1c1c" stroke-width="1"/><rect x="12.5" y="0.5" width="3" height="3" fill="#fff" stroke="#1c1c1c" stroke-width="1"/><rect x="6.5" y="6.5" width="3" height="3" fill="#e8e8ff" stroke="#0000a8" stroke-width="1"/></g><g transform="translate(455,131)"><circle cx="8" cy="8" r="7" fill="none" stroke="#606060" stroke-width="1" stroke-dasharray="1.5 1.2"/><rect x="6.5" y="6.5" width="3" height="3" fill="#e8e8ff" stroke="#0000a8" stroke-width="1"/><rect x="11.5" y="6.5" width="3" height="3" fill="#e8e8ff" stroke="#0000a8" stroke-width="1"/></g><g transform="translate(477,131)"><circle cx="8" cy="8" r="7" fill="none" stroke="#606060" stroke-width="1" stroke-dasharray="1.5 1.2"/><rect x="0.0" y="6.5" width="3" height="3" fill="#e8e8ff" stroke="#0000a8" stroke-width="1"/><rect x="13.0" y="6.5" width="3" height="3" fill="#e8e8ff" stroke="#0000a8" stroke-width="1"/></g><g transform="translate(500,131)"><path d="M2 4 Q1 12 8 15 Q15 12 14 4 Q9 -1 2 4" fill="none" stroke="#1c1c1c" stroke-width="1" stroke-dasharray="1.5 1.2"/><rect x="1.5" y="1.5" width="3" height="3" fill="#e8e8ff" stroke="#0000a8" stroke-width="1"/><rect x="11.5" y="1.5" width="3" height="3" fill="#e8e8ff" stroke="#0000a8" stroke-width="1"/><rect x="6.5" y="13.0" width="3" height="3" fill="#e8e8ff" stroke="#0000a8" stroke-width="1"/></g><g transform="translate(533,131)"><path d="M1 9 L9 1 M5 15 L15 5" fill="none" stroke="#1c1c1c" stroke-width="1.4" /><path d="M5 12 L12 5 L14 6 L6 14z" fill="#c8dcec"/><rect x="1.5" y="10.5" width="3" height="3" fill="#e8e8ff" stroke="#0000a8" stroke-width="1"/><rect x="10.5" y="0.5" width="3" height="3" fill="#e8e8ff" stroke="#0000a8" stroke-width="1"/></g><g transform="translate(554,131)"><path d="M1 9 L8 2 L15 9 L13 11 L8 6 L3 11z" fill="#c8dcec"/><path d="M0.5 9.5 L8 2 L15.5 9.5" fill="none" stroke="#1c1c1c" stroke-width="1.3" /><path d="M3 14.5 L8 9.5 L13 14.5" fill="none" stroke="#1c1c1c" stroke-width="1.3" /><rect x="6.5" y="4.0" width="3" height="3" fill="#e8e8ff" stroke="#0000a8" stroke-width="1"/><rect x="0.5" y="9.5" width="3" height="3" fill="#e8e8ff" stroke="#0000a8" stroke-width="1"/><rect x="12.5" y="9.5" width="3" height="3" fill="#e8e8ff" stroke="#0000a8" stroke-width="1"/></g><g transform="translate(577,131)"><path d="M5 1 H11 L15 5 V11 L11 15 H5 L1 11 V5z" fill="#d8dce0" stroke="#1c1c1c" stroke-width="1.2" /><circle cx="8" cy="8" r="4.3" fill="#f4f4f4" stroke="#1c1c1c" stroke-width="1.2"/><circle cx="8" cy="8" r="2" fill="#fff" stroke="#0000a8" stroke-width="1.2"/><rect x="0.5" y="0.5" width="3" height="3" fill="#e8e8ff" stroke="#0000a8" stroke-width="1"/></g><g transform="translate(599,131)"><path d="M1.5 4.5 L4.5 1.5 H10.5 L14.5 5.5 V11.5 L11.5 14.5 H5.5 L1.5 10.5z" fill="#fff" stroke="#000070" stroke-width="3" /><path d="M5 7 Q5 5 8 5 Q11 5 11 8 Q11 11 8 11 Q5 11 5 9z" fill="#fff" stroke="#000070" stroke-width="1.3" /><rect x="0.7" y="1.7" width="2.6" height="2.6" fill="#fff" stroke="#000080" stroke-width="1"/><rect x="5.2" y="0.7" width="2.6" height="2.6" fill="#fff" stroke="#000080" stroke-width="1"/><rect x="0.7" y="6.7" width="2.6" height="2.6" fill="#fff" stroke="#000080" stroke-width="1"/><rect x="12.7" y="7.7" width="2.6" height="2.6" fill="#fff" stroke="#000080" stroke-width="1"/><rect x="5.2" y="12.7" width="2.6" height="2.6" fill="#fff" stroke="#000080" stroke-width="1"/><rect x="12.7" y="12.7" width="2.6" height="2.6" fill="#fff" stroke="#000080" stroke-width="1"/></g><g transform="translate(621,131)"><path d="M1 1h14v14h-14z" fill="#c8dcec" stroke="#1c1c1c" stroke-width="1.4" /><path d="M4 4h8v8h-8z" fill="#fff" stroke="#1c1c1c" stroke-width="1.4" /><rect x="0.5" y="0.5" width="3" height="3" fill="#e8e8ff" stroke="#0000a8" stroke-width="1"/><rect x="12.5" y="12.5" width="3" height="3" fill="#e8e8ff" stroke="#0000a8" stroke-width="1"/></g><g transform="translate(643,131)"><path d="M1 8 L7 2 L13 8 L7 14z M4 8 L7 5 L10 8 L7 11z" fill="#f0f4f8" stroke="#1c1c1c" stroke-width="1.3" /><rect x="5.5" y="0.0" width="3" height="3" fill="#e8e8ff" stroke="#0000a8" stroke-width="1"/><rect x="5.5" y="13.0" width="3" height="3" fill="#e8e8ff" stroke="#0000a8" stroke-width="1"/><path d="M12 12 L14 14 M14 11 V15" fill="none" stroke="#0000a8" stroke-width="1.1" /></g><g transform="translate(665,131)"><path d="M1 5 L6 0.5 M5 1 L15 11 L11 15 L1 5" fill="none" stroke="#1c1c1c" stroke-width="1.4" /><path d="M5 4 L13 12 L11 14 L3 6z" fill="#c8dcec"/><rect x="2.5" y="2.5" width="3" height="3" fill="#e8e8ff" stroke="#0000a8" stroke-width="1"/><rect x="10.5" y="10.5" width="3" height="3" fill="#e8e8ff" stroke="#0000a8" stroke-width="1"/></g><g transform="translate(687,131)"><path d="M1 10 L10 1 M5 15 L15 5" fill="none" stroke="#1c1c1c" stroke-width="1.4" /><rect x="3.5" y="3.5" width="3" height="3" fill="#e8e8ff" stroke="#0000a8" stroke-width="1"/><rect x="8.5" y="8.5" width="3" height="3" fill="#e8e8ff" stroke="#0000a8" stroke-width="1"/><path d="M4 8 L8 4 L12 8" fill="none" stroke="#0000a8" stroke-width="0" /></g><g transform="translate(722,131)"><path d="M1.5 1.5h7v10h-7z" fill="#fff" stroke="#1c1c1c" stroke-width="1.4" /><path d="M7.5 4.5h7v11h-7z" fill="#fff" stroke="#1c1c1c" stroke-width="1.4" /></g><g transform="translate(743,131)"><path d="M1.5 0.5h8v5h-8z M4.5 5.5h8v5h-8z M7.5 10.5h8v5h-8z" fill="#fff" stroke="#202050" stroke-width="1.2" /><path d="M1 1h9v2h-9z M4 6h9v2h-9z M7 11h9v2h-9z" fill="#202060"/></g><g transform="translate(766,131)"><path d="M1.5 1.5h13v13h-13z" fill="#fff" stroke="#000060" stroke-width="1.4" /><path d="M1 1h14v4h-14z M1 7h14v3h-14z M1 12h14v3h-14z" fill="#101080"/></g><g transform="translate(788,131)"><path d="M1.5 1.5h9v9h-9z M5.5 5.5h9v9h-9z" fill="#f4e8e8" stroke="#a0a0a0" stroke-width="1" /><path d="M2 2 L14 14 M14 2 L2 14" fill="none" stroke="#e02020" stroke-width="2" /></g><g transform="translate(821,131)"><path d="M2.5 16V9 Q3 3 9 3H15" fill="none" stroke="#1c1c1c" stroke-width="1.4" /><path d="M2.5 9 Q3 3.5 9 3" fill="none" stroke="#a03030" stroke-width="1.3" /><path d="M3.5 4h5M3.5 4v5" fill="none" stroke="#d02020" stroke-width="1" stroke-dasharray="1 1"/></g><g transform="translate(843,131)"><path d="M1.5 1.5h5" fill="none" stroke="#0000a8" stroke-width="1.4" /><path d="M2.5 16V3.5h13" fill="none" stroke="#1c1c1c" stroke-width="1.4" /><path d="M3.5 4.5h7M3.5 4.5v7" fill="none" stroke="#1c1c1c" stroke-width="1" stroke-dasharray="1 1"/><path d="M2.5 13 L13 3.5" fill="none" stroke="#b04030" stroke-width="1" /><path d="M0.5 3v5" fill="none" stroke="#0000a8" stroke-width="1.6" /></g><g transform="translate(864,131)"><path d="M3 1.5h6" fill="none" stroke="#0000a8" stroke-width="1.4" /><path d="M2.5 16V3.5h13" fill="none" stroke="#1c1c1c" stroke-width="1.4" /><path d="M3.5 4.5h7M3.5 4.5v7" fill="none" stroke="#1c1c1c" stroke-width="1" stroke-dasharray="1 1"/><path d="M2.5 13 L13 3.5" fill="none" stroke="#b04030" stroke-width="1" /><path d="M1 4 L0.5 7 L2 8" fill="none" stroke="#0000a8" stroke-width="1.4" /></g><g transform="translate(886,131)"><path d="M3 1.5h6" fill="none" stroke="#0000a8" stroke-width="1.4" /><path d="M2.5 16V3.5h13" fill="none" stroke="#1c1c1c" stroke-width="1.4" /><path d="M3.5 4.5h7M3.5 4.5v7" fill="none" stroke="#1c1c1c" stroke-width="1" stroke-dasharray="1 1"/><path d="M2.5 11 L11 3.5" fill="none" stroke="#b04030" stroke-width="1" /><path d="M5 14 L14 5" fill="none" stroke="#0000a8" stroke-width="1" /><path d="M1 4 L0.5 7 L2 8" fill="none" stroke="#0000a8" stroke-width="1.4" /></g><g transform="translate(921,131)"><path d="M3 8 L9 2 L14 7 L8 13z" fill="#fff" stroke="#1c1c1c" stroke-width="1.2" /><path d="M5 6 L11 12" fill="none" stroke="#404040" stroke-width="1" /><path d="M3 8 Q1 11 4 13 L8 13" fill="none" stroke="#1c1c1c" stroke-width="1.2" /><text x="11" y="6" font-family="Liberation Sans" font-size="6" font-weight="bold" fill="#d02020">y</text><text x="0" y="16" font-family="Liberation Sans" font-size="6" font-weight="bold" fill="#d02020">x</text></g><g transform="translate(949,131)"><rect x="1.0" y="6.5" width="3" height="3" fill="#fff" stroke="#808080" stroke-width="1"/><path d="M5 8h8M10 5 L13 8 L10 11" fill="none" stroke="#1c1c1c" stroke-width="1.3" /><rect x="12.5" y="6.5" width="3" height="3" fill="#fff" stroke="#d02020" stroke-width="1"/></g><g transform="translate(971,131)"><path d="M1 9 L7 3 L14 14" fill="none" stroke="#1c1c1c" stroke-width="1.3" /><rect x="4.0" y="3.0" width="3" height="3" fill="#fff" stroke="#d02020" stroke-width="1"/><rect x="8.0" y="0.0" width="3" height="3" fill="#fff" stroke="#d02020" stroke-width="1"/></g><g transform="translate(993,131)"><path d="M1 15 L15 1" fill="none" stroke="#1c1c1c" stroke-width="1.3" /><rect x="3.5" y="9.5" width="3" height="3" fill="#fff" stroke="#d02020" stroke-width="1"/><rect x="9.5" y="3.5" width="3" height="3" fill="#fff" stroke="#d02020" stroke-width="1"/></g><g transform="translate(1015,131)"><path d="M2 14 A6.5 6.5 0 1 1 14 10" fill="none" stroke="#1c1c1c" stroke-width="1.3" /><rect x="7.0" y="8.0" width="3" height="3" fill="#fff" stroke="#d02020" stroke-width="1"/></g><g transform="translate(1037,131)"><path d="M1.5 4.5h10v10h-10z M1.5 4.5l3 -3h10v10l-3 3 M11.5 4.5l3 -3" fill="#fff" stroke="#1c1c1c" stroke-width="1.3" /><path d="M4 7h5v5h-5z" fill="none" stroke="#d02020" stroke-width="1.2" /><rect x="5.5" y="8.5" width="2" height="2" fill="#fff" stroke="#d02020" stroke-width="1"/></g><g transform="translate(1059,131)"><circle cx="8" cy="8" r="6.5" fill="none" stroke="#c02020" stroke-width="1.2" stroke-dasharray="2 0.8"/><path d="M1 8h14M8 1v14" fill="none" stroke="#1c1c1c" stroke-width="0.8" stroke-dasharray="1 1"/></g><g transform="translate(1081,131)"><path d="M1 1 L15 15 M15 1 L1 15" fill="none" stroke="#1c1c1c" stroke-width="1.3" /><rect x="6.5" y="6.5" width="3" height="3" fill="#fff" stroke="#d02020" stroke-width="1"/></g><g transform="translate(1103,131)"><rect x="2" y="2" width="1.2" height="1.2" fill="#202020"/><rect x="2" y="6" width="1.2" height="1.2" fill="#202020"/><rect x="2" y="10" width="1.2" height="1.2" fill="#202020"/><rect x="2" y="14" width="1.2" height="1.2" fill="#202020"/><rect x="6" y="2" width="1.2" height="1.2" fill="#202020"/><rect x="6" y="6" width="1.2" height="1.2" fill="#202020"/><rect x="6" y="10" width="1.2" height="1.2" fill="#202020"/><rect x="6" y="14" width="1.2" height="1.2" fill="#202020"/><rect x="10" y="2" width="1.2" height="1.2" fill="#202020"/><rect x="10" y="6" width="1.2" height="1.2" fill="#202020"/><rect x="10" y="10" width="1.2" height="1.2" fill="#202020"/><rect x="10" y="14" width="1.2" height="1.2" fill="#202020"/><rect x="14" y="2" width="1.2" height="1.2" fill="#202020"/><rect x="14" y="6" width="1.2" height="1.2" fill="#202020"/><rect x="14" y="10" width="1.2" height="1.2" fill="#202020"/><rect x="12.5" y="12.5" width="3" height="3" fill="#fff" stroke="#d02020" stroke-width="1"/></g><g transform="translate(1131,131)"><path d="M1 7 L6 2 L11 7 L6 12z" fill="none" stroke="#1c1c1c" stroke-width="1.2" /><rect x="4.5" y="5.5" width="3" height="3" fill="#fff" stroke="#d02020" stroke-width="1"/><rect x="11.5" y="1.5" width="3" height="3" fill="#fff" stroke="#808080" stroke-width="1"/><path d="M6 7 L14 15" fill="none" stroke="#1c1c1c" stroke-width="1" /></g><g transform="translate(1153,131)"><path d="M2 15 Q5 5 15 4 M1 12 L13 1" fill="none" stroke="#1c1c1c" stroke-width="1.3" /><rect x="6.5" y="4.5" width="3" height="3" fill="#fff" stroke="#d02020" stroke-width="1"/></g><g transform="translate(1175,131)"><path d="M1 8.5h14 M8 5v8" fill="none" stroke="#1c1c1c" stroke-width="1.4" /><path d="M6 1h4v4h-4z" fill="#d02020"/><path d="M6 1 L10 5 M10 1 L6 5" fill="none" stroke="#fff" stroke-width="0.8" /><rect x="6.5" y="12.5" width="3" height="3" fill="#fff" stroke="#d02020" stroke-width="1"/></g><g transform="translate(1197,131)"><path d="M8 1v14M1 8h14M3 3l10 10M13 3L3 13" fill="none" stroke="#909090" stroke-width="1" /><path d="M12 2 L15 3" fill="none" stroke="#d02020" stroke-width="1" /></g><g transform="translate(1225,131)"><path d="M3 11 V7 A5 5 0 0 1 13 7 V11" fill="none" stroke="#1c1c1c" stroke-width="3.2" /><path d="M2 15 L8 10 L14 15" fill="none" stroke="#1c1c1c" stroke-width="1.2" /><rect x="6.5" y="9.0" width="3" height="3" fill="#fff" stroke="#d02020" stroke-width="1"/></g><g transform="translate(1253,131)"><path d="M2 2 V15" fill="none" stroke="#1c1c1c" stroke-width="1.5" /><path d="M2 2 H11 V8" fill="none" stroke="#1c1c1c" stroke-width="1" stroke-dasharray="1 1"/><rect x="0.5" y="0.5" width="3" height="3" fill="#fff" stroke="#d02020" stroke-width="1"/><rect x="9.5" y="8.5" width="3" height="3" fill="#fff" stroke="#d02020" stroke-width="1"/><path d="M11 11 L15 15" fill="none" stroke="#1c1c1c" stroke-width="1.2" /></g><rect x="580" y="158" width="2" height="2" fill="#b4b4b4"/><rect x="580" y="162" width="2" height="2" fill="#b4b4b4"/><rect x="580" y="166" width="2" height="2" fill="#b4b4b4"/><rect x="580" y="170" width="2" height="2" fill="#b4b4b4"/><g transform="translate(586,156)"><path d="M4 3v9h10" fill="none" stroke="#1c1c1c" stroke-width="1.3" /><path d="M4 1 L2 4 H6z M16 12 L13 10 V14z" fill="#000"/><rect x="6.5" y="5.5" width="3" height="3" fill="#e8e8ff" stroke="#0000a8" stroke-width="1"/><text x="0" y="5" font-family="Liberation Sans" font-size="5" font-weight="bold" fill="#0000a8">x</text><text x="9" y="16" font-family="Liberation Sans" font-size="5" font-weight="bold" fill="#0000a8">x</text></g><g transform="translate(609,156)"><path d="M1 8 L7 2 L13 8 L7 14z" fill="none" stroke="#1c1c1c" stroke-width="1.2" /><path d="M5 4 L10 9" fill="none" stroke="#1c1c1c" stroke-width="1.3" /><text x="10" y="6" font-family="Liberation Sans" font-size="7" font-weight="bold" fill="#0000a8">?</text></g><g transform="translate(631,156)"><path d="M1 15h13 M1 15 L8 2 M4 7 L12 15" fill="none" stroke="#1c1c1c" stroke-width="1.3" /><path d="M5 6 Q10 6 11 12" fill="none" stroke="#1c1c1c" stroke-width="1" /><text x="9" y="7" font-family="Liberation Sans" font-size="7" font-weight="bold" fill="#0000a8">?</text></g><g transform="translate(653,156)"><path d="M1.5 1.5h13v13h-13z" fill="#a8b4d8" stroke="#1c1c1c" stroke-width="1.3" /><rect x="2" y="2" width="1" height="1" fill="#2030a0"/><rect x="2" y="6" width="1" height="1" fill="#2030a0"/><rect x="2" y="10" width="1" height="1" fill="#2030a0"/><rect x="4" y="4" width="1" height="1" fill="#2030a0"/><rect x="4" y="8" width="1" height="1" fill="#2030a0"/><rect x="4" y="12" width="1" height="1" fill="#2030a0"/><rect x="6" y="2" width="1" height="1" fill="#2030a0"/><rect x="6" y="6" width="1" height="1" fill="#2030a0"/><rect x="6" y="10" width="1" height="1" fill="#2030a0"/><rect x="8" y="4" width="1" height="1" fill="#2030a0"/><rect x="8" y="8" width="1" height="1" fill="#2030a0"/><rect x="8" y="12" width="1" height="1" fill="#2030a0"/><rect x="10" y="2" width="1" height="1" fill="#2030a0"/><rect x="10" y="6" width="1" height="1" fill="#2030a0"/><rect x="10" y="10" width="1" height="1" fill="#2030a0"/><rect x="12" y="4" width="1" height="1" fill="#2030a0"/><rect x="12" y="8" width="1" height="1" fill="#2030a0"/><rect x="12" y="12" width="1" height="1" fill="#2030a0"/><path d="M5 8h6" fill="none" stroke="#0000a8" stroke-width="1.2" /><path d="M2 12h12v2h-12z" fill="#d0d090"/></g><rect x="390" y="183" width="2" height="2" fill="#b4b4b4"/><rect x="390" y="187" width="2" height="2" fill="#b4b4b4"/><rect x="390" y="191" width="2" height="2" fill="#b4b4b4"/><rect x="390" y="195" width="2" height="2" fill="#b4b4b4"/><rect x="464" y="181" width="1" height="16" fill="#c8c8c8"/><rect x="465" y="181" width="1" height="16" fill="#ffffff"/><g transform="translate(397,182)"><path d="M1 13.5h8 A4.5 4.5 0 1 0 9.5 4.5" fill="none" stroke="#0000a8" stroke-width="1.2" /><rect x="-0.5" y="12.0" width="3" height="3" fill="#e8e8ff" stroke="#0000a8" stroke-width="1"/><rect x="8.0" y="12.0" width="3" height="3" fill="#e8e8ff" stroke="#0000a8" stroke-width="1"/><rect x="8.0" y="3.0" width="3" height="3" fill="#e8e8ff" stroke="#0000a8" stroke-width="1"/></g><g transform="translate(420,182)"><path d="M8 1.5 L14.5 6.5 L12 14.5 H4 L1.5 6.5z" fill="#dce8f0" stroke="#1c1c1c" stroke-width="1.4" /></g><g transform="translate(442,182)"><path d="M2 3.5h12v9h-12z" fill="#c8dcec" stroke="#1c1c1c" stroke-width="1.5" /><rect x="0.5" y="2.0" width="3" height="3" fill="#e8e8ff" stroke="#0000a8" stroke-width="1"/><rect x="12.5" y="11.0" width="3" height="3" fill="#e8e8ff" stroke="#0000a8" stroke-width="1"/></g><g transform="translate(470,182)"><path d="M1 9 L8 2 L15 9 L13 11 L8 6 L3 11z" fill="#c8dcec"/><path d="M0.5 9.5 L8 2 L15.5 9.5" fill="none" stroke="#1c1c1c" stroke-width="1.3" /><path d="M3 14.5 L8 9.5 L13 14.5" fill="none" stroke="#1c1c1c" stroke-width="1.3" /><rect x="6.5" y="4.0" width="3" height="3" fill="#e8e8ff" stroke="#0000a8" stroke-width="1"/><rect x="0.5" y="9.5" width="3" height="3" fill="#e8e8ff" stroke="#0000a8" stroke-width="1"/><rect x="12.5" y="9.5" width="3" height="3" fill="#e8e8ff" stroke="#0000a8" stroke-width="1"/></g><g transform="translate(492,182)"><path d="M1.5 4.5 L4.5 1.5 H10.5 L14.5 5.5 V11.5 L11.5 14.5 H5.5 L1.5 10.5z" fill="#fff" stroke="#000070" stroke-width="3" /><path d="M5 7 Q5 5 8 5 Q11 5 11 8 Q11 11 8 11 Q5 11 5 9z" fill="#fff" stroke="#000070" stroke-width="1.3" /><rect x="0.7" y="1.7" width="2.6" height="2.6" fill="#fff" stroke="#000080" stroke-width="1"/><rect x="5.2" y="0.7" width="2.6" height="2.6" fill="#fff" stroke="#000080" stroke-width="1"/><rect x="0.7" y="6.7" width="2.6" height="2.6" fill="#fff" stroke="#000080" stroke-width="1"/><rect x="12.7" y="7.7" width="2.6" height="2.6" fill="#fff" stroke="#000080" stroke-width="1"/><rect x="5.2" y="12.7" width="2.6" height="2.6" fill="#fff" stroke="#000080" stroke-width="1"/><rect x="12.7" y="12.7" width="2.6" height="2.6" fill="#fff" stroke="#000080" stroke-width="1"/></g><g transform="translate(515,182)"><path d="M5 1 H11 L15 5 V11 L11 15 H5 L1 11 V5z" fill="#d8dce0" stroke="#1c1c1c" stroke-width="1.2" /><circle cx="8" cy="8" r="4.3" fill="#f4f4f4" stroke="#1c1c1c" stroke-width="1.2"/><circle cx="8" cy="8" r="2" fill="#fff" stroke="#0000a8" stroke-width="1.2"/><rect x="0.5" y="0.5" width="3" height="3" fill="#e8e8ff" stroke="#0000a8" stroke-width="1"/></g><g transform="translate(536,182)"><path d="M0.8 0.8h14.4v14.4h-14.4z" fill="#c8dcec" stroke="#1c1c1c" stroke-width="1.6" /><path d="M4 4h8v8h-8z" fill="#fff" stroke="#1c1c1c" stroke-width="1.6" /><path d="M0 0h3v3h-3z M13 13h3v3h-3z" fill="#0000a8"/></g><path d="M467 109h8l-4 4z" fill="#000"/><path d="M567 109h8l-4 4z" fill="#000"/><path d="M651 109h8l-4 4z" fill="#000"/><path d="M762 109h8l-4 4z" fill="#000"/><path d="M871 109h8l-4 4z" fill="#000"/><rect x="483" y="110" width="76" height="1.6" fill="#000"/><rect x="8" y="209" width="2" height="2" fill="#b4b4b4"/><rect x="12" y="209" width="2" height="2" fill="#b4b4b4"/><rect x="16" y="209" width="2" height="2" fill="#b4b4b4"/><rect x="20" y="209" width="2" height="2" fill="#b4b4b4"/><rect x="8" y="642" width="2" height="2" fill="#b4b4b4"/><rect x="12" y="642" width="2" height="2" fill="#b4b4b4"/><rect x="16" y="642" width="2" height="2" fill="#b4b4b4"/><rect x="20" y="642" width="2" height="2" fill="#b4b4b4"/><rect x="33" y="209" width="2" height="2" fill="#b4b4b4"/><rect x="37" y="209" width="2" height="2" fill="#b4b4b4"/><rect x="41" y="209" width="2" height="2" fill="#b4b4b4"/><rect x="45" y="209" width="2" height="2" fill="#b4b4b4"/><rect x="33" y="310" width="2" height="2" fill="#b4b4b4"/><rect x="37" y="310" width="2" height="2" fill="#b4b4b4"/><rect x="41" y="310" width="2" height="2" fill="#b4b4b4"/><rect x="45" y="310" width="2" height="2" fill="#b4b4b4"/><rect x="33" y="499" width="2" height="2" fill="#b4b4b4"/><rect x="37" y="499" width="2" height="2" fill="#b4b4b4"/><rect x="41" y="499" width="2" height="2" fill="#b4b4b4"/><rect x="45" y="499" width="2" height="2" fill="#b4b4b4"/><rect x="58" y="209" width="2" height="2" fill="#b4b4b4"/><rect x="62" y="209" width="2" height="2" fill="#b4b4b4"/><rect x="66" y="209" width="2" height="2" fill="#b4b4b4"/><rect x="70" y="209" width="2" height="2" fill="#b4b4b4"/><rect x="58" y="361" width="2" height="2" fill="#b4b4b4"/><rect x="62" y="361" width="2" height="2" fill="#b4b4b4"/><rect x="66" y="361" width="2" height="2" fill="#b4b4b4"/><rect x="70" y="361" width="2" height="2" fill="#b4b4b4"/><rect x="58" y="534" width="2" height="2" fill="#b4b4b4"/><rect x="62" y="534" width="2" height="2" fill="#b4b4b4"/><rect x="66" y="534" width="2" height="2" fill="#b4b4b4"/><rect x="70" y="534" width="2" height="2" fill="#b4b4b4"/><rect x="6" y="347" width="18" height="1" fill="#c8c8c8"/><rect x="6" y="348" width="18" height="1" fill="#ffffff"/><rect x="6" y="419" width="18" height="1" fill="#c8c8c8"/><rect x="6" y="420" width="18" height="1" fill="#ffffff"/><rect x="6" y="513" width="18" height="1" fill="#c8c8c8"/><rect x="6" y="514" width="18" height="1" fill="#ffffff"/><rect x="6" y="585" width="18" height="1" fill="#c8c8c8"/><rect x="6" y="586" width="18" height="1" fill="#ffffff"/><rect x="31" y="549" width="19" height="1" fill="#c8c8c8"/><rect x="31" y="550" width="19" height="1" fill="#ffffff"/><rect x="31" y="643" width="19" height="1" fill="#c8c8c8"/><rect x="31" y="644" width="19" height="1" fill="#ffffff"/><rect x="56" y="411" width="19" height="1" fill="#c8c8c8"/><rect x="56" y="412" width="19" height="1" fill="#ffffff"/><rect x="56" y="650" width="19" height="1" fill="#c8c8c8"/><rect x="56" y="651" width="19" height="1" fill="#ffffff"/><g transform="translate(7,217)"><path d="M4 11 L13 2" fill="none" stroke="#1c1c1c" stroke-width="4.5" /><path d="M4.5 10.5 L12.5 2.5" fill="none" stroke="#e8d040" stroke-width="3" /><path d="M3 12 L6 9" fill="none" stroke="#c04030" stroke-width="4" /><path d="M6 15h10" fill="none" stroke="#1c1c1c" stroke-width="1.3" /></g><g transform="translate(7,239)"><circle cx="4.5" cy="4.5" r="3.5" fill="#fff0f0" stroke="#a02020" stroke-width="1.2"/><circle cx="9" cy="11.5" r="3.5" fill="#ffd0d0" stroke="#a02020" stroke-width="1.2"/><circle cx="12" cy="12.5" r="3.2" fill="#ffd8d8" stroke="#a02020" stroke-width="1.2"/><path d="M8 3 Q12 2 13 6" fill="none" stroke="#0000a8" stroke-width="1.3" /><path d="M11 5 L15 5 L13 8z" fill="#0000a8"/></g><g transform="translate(7,262)"><path d="M1.5 4.5h7v7h-7z M5.5 8.5h7v7h-7z" fill="#e4e4e4" stroke="#a0a0a0" stroke-width="1.2" /><path d="M9 4 L14 2 M12 1 L14 2 L13 4" fill="none" stroke="#a0a0a0" stroke-width="1" /></g><g transform="translate(7,284)"><path d="M6.5 2 V15 H1z" fill="#dcdcdc"/><path d="M9.5 2 V15 H15z" fill="#dcdcdc"/><path d="M6.5 2 V15 H1z M9.5 2 V15 H15z" fill="none" stroke="#a8a8a8" stroke-width="1" /><path d="M8 0v16" fill="none" stroke="#b8b8b8" stroke-width="1" /></g><g transform="translate(7,306)"><path d="M1.5 14.5h13 V10 Q14 7 11 8 Q10 2 7 2 Q4 2 4 6 Q1 7 1.5 10z" fill="#fff" stroke="#401010" stroke-width="1.4" /><path d="M4 12h8" fill="none" stroke="#d02020" stroke-width="1" /></g><g transform="translate(7,328)"><path d="M1.5 1.5h5v5h-5z M9.5 1.5h5v5h-5z M1.5 9.5h5v5h-5z M9.5 9.5h5v5h-5z" fill="#dcdcdc" stroke="#b0b0b0" stroke-width="1.2" /></g><g transform="translate(7,356)"><path d="M8 1v14M1 8h14" fill="none" stroke="#401010" stroke-width="2" /><path d="M8 0 L4.5 4 H11.5z M8 16 L4.5 12 H11.5z M0 8 L4 4.5 V11.5z M16 8 L12 4.5 V11.5z" fill="#401010"/></g><g transform="translate(7,378)"><path d="M5 3 A6 6 0 1 0 12 3.5" fill="none" stroke="#401010" stroke-width="2" /><path d="M2 1 L8 1 L5 6z" fill="#401010"/></g><g transform="translate(7,400)"><path d="M5.5 1.5h9v9" fill="none" stroke="#d02020" stroke-width="1.3" /><path d="M14.5 10.5v4h-13v-9h4" fill="none" stroke="#401010" stroke-width="1.3" /><path d="M2.5 6.5h7v7" fill="none" stroke="#1c1c1c" stroke-width="1" stroke-dasharray="1 1"/></g><g transform="translate(7,427)"><path d="M1.5 2.5h6l7 13h-13z" fill="none" stroke="#1c1c1c" stroke-width="1.3" /><path d="M8 3.5 L14 14.5 H8z" fill="#f8d8d8"/><path d="M7.5 3v12" fill="none" stroke="#d02020" stroke-width="1" stroke-dasharray="1.2 1"/></g><g transform="translate(7,449)"><path d="M0.5 8.5h15" fill="none" stroke="#1c1c1c" stroke-width="1.2" /><path d="M9 14 L13 3" fill="none" stroke="#0000a8" stroke-width="1.5" /></g><g transform="translate(7,471)"><path d="M0.5 5.5h7M0.5 8.5h7M0.5 11.5h6" fill="none" stroke="#1c1c1c" stroke-width="1.3" /><path d="M8 5.5h4M8 8.5h4" fill="none" stroke="#d02020" stroke-width="1" stroke-dasharray="1.5 1"/><path d="M9 14 L14 3" fill="none" stroke="#0000a8" stroke-width="1.5" /></g><g transform="translate(7,494)"><path d="M6 15 A6.5 6.5 0 1 1 13 5.5" fill="none" stroke="#d02020" stroke-width="1.4" /><path d="M8 14 A 6 6 0 0 0 13.5 6" fill="none" stroke="#1c1c1c" stroke-width="1.2" /><path d="M6 10 L14 1" fill="none" stroke="#1c1c1c" stroke-width="1.2" /></g><g transform="translate(7,522)"><path d="M1.5 1.5h5" fill="none" stroke="#0000a8" stroke-width="1.4" /><path d="M2.5 16V3.5h13" fill="none" stroke="#1c1c1c" stroke-width="1.4" /><path d="M3.5 4.5h7M3.5 4.5v7" fill="none" stroke="#1c1c1c" stroke-width="1" stroke-dasharray="1 1"/><path d="M2.5 13 L13 3.5" fill="none" stroke="#b04030" stroke-width="1" /><path d="M0.5 3v5" fill="none" stroke="#0000a8" stroke-width="1.6" /></g><g transform="translate(7,544)"><path d="M3 1.5h6" fill="none" stroke="#0000a8" stroke-width="1.4" /><path d="M2.5 16V3.5h13" fill="none" stroke="#1c1c1c" stroke-width="1.4" /><path d="M3.5 4.5h7M3.5 4.5v7" fill="none" stroke="#1c1c1c" stroke-width="1" stroke-dasharray="1 1"/><path d="M2.5 13 L13 3.5" fill="none" stroke="#b04030" stroke-width="1" /><path d="M1 4 L0.5 7 L2 8" fill="none" stroke="#0000a8" stroke-width="1.4" /></g><g transform="translate(7,566)"><path d="M3 1.5h6" fill="none" stroke="#0000a8" stroke-width="1.4" /><path d="M2.5 16V3.5h13" fill="none" stroke="#1c1c1c" stroke-width="1.4" /><path d="M3.5 4.5h7M3.5 4.5v7" fill="none" stroke="#1c1c1c" stroke-width="1" stroke-dasharray="1 1"/><path d="M2.5 11 L11 3.5" fill="none" stroke="#b04030" stroke-width="1" /><path d="M5 14 L14 5" fill="none" stroke="#0000a8" stroke-width="1" /><path d="M1 4 L0.5 7 L2 8" fill="none" stroke="#0000a8" stroke-width="1.4" /></g><g transform="translate(7,594)"><path d="M2.5 16V9 Q3 3 9 3H15" fill="none" stroke="#1c1c1c" stroke-width="1.4" /><path d="M2.5 9 Q3 3.5 9 3" fill="none" stroke="#a03030" stroke-width="1.3" /><path d="M3.5 4h5M3.5 4v5" fill="none" stroke="#d02020" stroke-width="1" stroke-dasharray="1 1"/></g><g transform="translate(7,615)"><path d="M3 13 L13 3" fill="none" stroke="#b0b0b0" stroke-width="4" /><path d="M1 15 L4 12" fill="none" stroke="#909090" stroke-width="2" /><path d="M12 1 L15 4 M13 0 L14 1 M5 14 L2 10" fill="none" stroke="#c8c8c8" stroke-width="1" /></g><g transform="translate(7,650)"><path d="M1.5 1.5h8v8h-8z" fill="#d8d8d8" stroke="#a0a0a0" stroke-width="1.2" /><path d="M6.5 6.5h8v8h-8z" fill="#c0c0c0" stroke="#a0a0a0" stroke-width="1.2" /></g><g transform="translate(7,672)"><path d="M1.5 1.5h8v8h-8z" fill="#c8c8c8" stroke="#a0a0a0" stroke-width="1.2" /><path d="M6.5 6.5h8v8h-8z" fill="#b8b8b8" stroke="#a0a0a0" stroke-width="1.2" /></g><g transform="translate(7,695)"><path d="M1.5 1.5h8v8h-8z" fill="#e8e8e8" stroke="#a0a0a0" stroke-width="1.2" /><path d="M6.5 6.5h8v8h-8z" fill="#c8c8c8" stroke="#a0a0a0" stroke-width="1.2" /><path d="M3 3 L13 13" fill="none" stroke="#a0a0a0" stroke-width="1" /></g><g transform="translate(7,717)"><path d="M1.5 1.5h8v8h-8z" fill="#f4f4f4" stroke="#a0a0a0" stroke-width="1.2" /><path d="M6.5 6.5h8v8h-8z" fill="#c8c8c8" stroke="#a0a0a0" stroke-width="1.2" /></g><g transform="translate(32,218)"><path d="M3.5 1v14.5M1 12.5h14" fill="none" stroke="#1c1c1c" stroke-width="1.5" /><rect x="11.5" y="1.5" width="3" height="3" fill="#fff" stroke="#d02020" stroke-width="1"/></g><g transform="translate(32,239)"><path d="M2.5 1v14.5M1 13.5h14" fill="none" stroke="#1c1c1c" stroke-width="1.5" /><path d="M5 5v7M5 10h8" fill="none" stroke="#606060" stroke-width="1" /><circle cx="5" cy="9.5" r="1.7" fill="#fff" stroke="#0000a8" stroke-width="1.1"/><rect x="11.5" y="1.5" width="3" height="3" fill="#fff" stroke="#d02020" stroke-width="1"/></g><g transform="translate(32,261)"><path d="M1 14.5h14 M1 14.5 L12 3" fill="none" stroke="#1c1c1c" stroke-width="1.4" /><path d="M2 9 L8 3 M5 12 L11 6" fill="none" stroke="#0000a8" stroke-width="1.2" /><path d="M8 2 L4 3 L7 6z M12 5 L11 9 L8 7z" fill="#0000a8"/><path d="M10 14 Q11 10 8 8" fill="none" stroke="#1c1c1c" stroke-width="1" /></g><g transform="translate(32,282)"><path d="M2 14 L2.5 14 M5 11 L12 4" fill="none" stroke="#1c1c1c" stroke-width="1.4" /><path d="M12 3 L8 4 L11 7z" fill="#000"/><path d="M2 11.5 L4.5 14 L2 16.5 L-0.5 14z" fill="none" stroke="#0000a8" stroke-width="1.2" /><path d="M12 0 L15 3 L12 6 L9 3z" fill="#d02020"/></g><g transform="translate(32,319)"><circle cx="8" cy="8" r="6.5" fill="#e0e8ee" stroke="#1c1c1c" stroke-width="1.4"/><path d="M8 8 L13 3" fill="none" stroke="#0000a8" stroke-width="1.2" /><rect x="6.5" y="6.5" width="3" height="3" fill="#e8e8ff" stroke="#0000a8" stroke-width="1"/></g><g transform="translate(32,341)"><circle cx="8" cy="8" r="6.5" fill="#e0e8ee" stroke="#1c1c1c" stroke-width="1.4"/><rect x="6.5" y="0.0" width="3" height="3" fill="#e8e8ff" stroke="#0000a8" stroke-width="1"/><rect x="6.5" y="13.0" width="3" height="3" fill="#e8e8ff" stroke="#0000a8" stroke-width="1"/></g><g transform="translate(32,363)"><circle cx="8" cy="8" r="6.5" fill="#e0e8ee" stroke="#1c1c1c" stroke-width="1.4"/><rect x="6.5" y="0.0" width="3" height="3" fill="#e8e8ff" stroke="#0000a8" stroke-width="1"/><rect x="13.0" y="7.5" width="3" height="3" fill="#e8e8ff" stroke="#0000a8" stroke-width="1"/><rect x="6.5" y="13.0" width="3" height="3" fill="#e8e8ff" stroke="#0000a8" stroke-width="1"/></g><g transform="translate(32,385)"><circle cx="8" cy="8" r="5" fill="#e0e8ee" stroke="#1c1c1c" stroke-width="1.2"/><path d="M1 2 L15 15 M15 2 L1 15" fill="none" stroke="#1c1c1c" stroke-width="1.3" /><rect x="1.5" y="6.5" width="3" height="3" fill="#e8e8ff" stroke="#0000a8" stroke-width="1"/><rect x="11.5" y="6.5" width="3" height="3" fill="#e8e8ff" stroke="#0000a8" stroke-width="1"/><rect x="6.5" y="11.5" width="3" height="3" fill="#e8e8ff" stroke="#0000a8" stroke-width="1"/></g><g transform="translate(32,407)"><circle cx="8" cy="8" r="6" fill="#e0e8ee" stroke="#1c1c1c" stroke-width="1.2"/><path d="M1 6 L6 1 M15 2 V15 M1 12 L6 15" fill="none" stroke="#1c1c1c" stroke-width="1.3" /><rect x="1.5" y="3.5" width="3" height="3" fill="#e8e8ff" stroke="#0000a8" stroke-width="1"/><rect x="12.5" y="6.5" width="3" height="3" fill="#e8e8ff" stroke="#0000a8" stroke-width="1"/><rect x="1.5" y="9.5" width="3" height="3" fill="#e8e8ff" stroke="#0000a8" stroke-width="1"/><rect x="6.5" y="12.5" width="3" height="3" fill="#e8e8ff" stroke="#0000a8" stroke-width="1"/></g><g transform="translate(32,429)"><circle cx="8" cy="9" r="6" fill="#e0e8ee" stroke="#1c1c1c" stroke-width="1.2"/><path d="M1 4 L8 1 L15 6 M15 3 V15" fill="none" stroke="#1c1c1c" stroke-width="1.3" /><rect x="6.5" y="7.5" width="3" height="3" fill="#e8e8ff" stroke="#0000a8" stroke-width="1"/><rect x="2.5" y="3.5" width="3" height="3" fill="#e8e8ff" stroke="#0000a8" stroke-width="1"/><rect x="12.5" y="7.5" width="3" height="3" fill="#e8e8ff" stroke="#0000a8" stroke-width="1"/></g><g transform="translate(32,451)"><circle cx="8" cy="8.5" r="6.5" fill="#e0e8ee" stroke="#1c1c1c" stroke-width="1.3"/><path d="M1 1.5h14" fill="none" stroke="#1c1c1c" stroke-width="1.5" /><path d="M8 2v12" fill="none" stroke="#0000a8" stroke-width="1" stroke-dasharray="1 1"/><rect x="6.5" y="13.0" width="3" height="3" fill="#e8e8ff" stroke="#0000a8" stroke-width="1"/><rect x="12.5" y="7.0" width="3" height="3" fill="#e8e8ff" stroke="#0000a8" stroke-width="1"/></g><g transform="translate(32,473)"><circle cx="7" cy="8" r="6.5" fill="none" stroke="#1c1c1c" stroke-width="1.3"/><circle cx="7" cy="8" r="3.5" fill="none" stroke="#1c1c1c" stroke-width="1.2"/><rect x="5.5" y="6.5" width="3" height="3" fill="#e8e8ff" stroke="#0000a8" stroke-width="1"/><rect x="9.5" y="6.5" width="3" height="3" fill="#e8e8ff" stroke="#0000a8" stroke-width="1"/><rect x="12.5" y="6.5" width="3" height="3" fill="#e8e8ff" stroke="#0000a8" stroke-width="1"/></g><g transform="translate(32,507)"><path d="M4.5 2.5h7v11h-7z" fill="none" stroke="#d02020" stroke-width="1.2" stroke-dasharray="2 1.2"/></g><g transform="translate(32,529)"><path d="M0 0h16v16h-16z" fill="#30d8e8"/><path d="M4.5 2.5h7v11h-7z" fill="#fff" stroke="#a0a0a0" stroke-width="1" /></g><g transform="translate(32,557)"><path d="M2.5 1.5h12v4h-8v9.5h-4z" fill="#fff" stroke="#1c1c1c" stroke-width="1.6" /><path d="M8 2v2M10 2v2M12 2v2M3 7h2M3 9h2M3 11h2" fill="none" stroke="#1c1c1c" stroke-width="1" /></g><g transform="translate(32,579)"><path d="M0 0h12v11h-12z" fill="#808080"/><path d="M13 1v14M1 13h14" fill="none" stroke="#1c1c1c" stroke-width="1.5" /><path d="M13 3h3v3h-3z M13 8h3v3h-3z M2 13h3v3h-3z M7 13h3v3h-3z" fill="#c0c0c0"/></g><g transform="translate(32,600)"><path d="M1.5 5.5h13v6h-13z" fill="#fff" stroke="#1c1c1c" stroke-width="1.4" /><path d="M4 8.5h2M7 8.5h2M10 8.5h2" fill="none" stroke="#1c1c1c" stroke-width="1.4" /></g><g transform="translate(32,623)"><path d="M7.5 2.5h8v6h-8z" fill="#fff" stroke="#1c1c1c" stroke-width="1.2" /><path d="M1 2h4v2h-4z M1 6h4v3h-4z" fill="none" stroke="#1c1c1c" stroke-width="1" /><path d="M10 5.5h2" fill="none" stroke="#1c1c1c" stroke-width="1" /></g><g transform="translate(32,652)"><path d="M1 1 L6 6 M6 1 L1 6" fill="none" stroke="#606060" stroke-width="0.9" /><rect x="7" y="6" width="1" height="1" fill="#202060"/><rect x="7" y="9" width="1" height="1" fill="#202060"/><rect x="7" y="12" width="1" height="1" fill="#202060"/><rect x="10" y="6" width="1" height="1" fill="#202060"/><rect x="10" y="9" width="1" height="1" fill="#202060"/><rect x="10" y="12" width="1" height="1" fill="#202060"/><rect x="13" y="6" width="1" height="1" fill="#202060"/><rect x="13" y="9" width="1" height="1" fill="#202060"/><rect x="13" y="12" width="1" height="1" fill="#202060"/><rect x="4" y="12" width="1" height="1" fill="#202060"/><rect x="4" y="15" width="1" height="1" fill="#202060"/><rect x="7" y="12" width="1" height="1" fill="#202060"/><rect x="7" y="15" width="1" height="1" fill="#202060"/><rect x="10" y="12" width="1" height="1" fill="#202060"/><rect x="10" y="15" width="1" height="1" fill="#202060"/><rect x="13" y="12" width="1" height="1" fill="#202060"/><rect x="13" y="15" width="1" height="1" fill="#202060"/><rect x="10" y="3" width="1" height="1" fill="#202060"/><rect x="13" y="3" width="1" height="1" fill="#202060"/></g><g transform="translate(32,674)"><rect x="2" y="1" width="1" height="1" fill="#202060"/><rect x="2" y="4" width="1" height="1" fill="#202060"/><rect x="2" y="7" width="1" height="1" fill="#202060"/><rect x="5" y="1" width="1" height="1" fill="#202060"/><rect x="5" y="4" width="1" height="1" fill="#202060"/><rect x="5" y="7" width="1" height="1" fill="#202060"/><rect x="8" y="1" width="1" height="1" fill="#202060"/><rect x="8" y="4" width="1" height="1" fill="#202060"/><rect x="8" y="7" width="1" height="1" fill="#202060"/><text x="1" y="16" font-family="Liberation Sans" font-size="9" font-weight="bold" fill="#1c1c1c">×2</text></g><g transform="translate(32,696)"><rect x="2" y="1" width="1" height="1" fill="#202060"/><rect x="2" y="4" width="1" height="1" fill="#202060"/><rect x="2" y="7" width="1" height="1" fill="#202060"/><rect x="5" y="1" width="1" height="1" fill="#202060"/><rect x="5" y="4" width="1" height="1" fill="#202060"/><rect x="5" y="7" width="1" height="1" fill="#202060"/><rect x="8" y="1" width="1" height="1" fill="#202060"/><rect x="8" y="4" width="1" height="1" fill="#202060"/><rect x="8" y="7" width="1" height="1" fill="#202060"/><path d="M2 15.5 L7 10.5" fill="none" stroke="#1c1c1c" stroke-width="1.4" /><text x="8" y="16" font-family="Liberation Sans" font-size="9" font-weight="bold" fill="#1c1c1c">2</text></g><g transform="translate(32,717)"><rect x="1" y="1" width="1" height="1" fill="#202060"/><rect x="1" y="4" width="1" height="1" fill="#202060"/><rect x="1" y="7" width="1" height="1" fill="#202060"/><rect x="4" y="1" width="1" height="1" fill="#202060"/><rect x="4" y="4" width="1" height="1" fill="#202060"/><rect x="4" y="7" width="1" height="1" fill="#202060"/><rect x="7" y="1" width="1" height="1" fill="#202060"/><rect x="7" y="4" width="1" height="1" fill="#202060"/><rect x="7" y="7" width="1" height="1" fill="#202060"/><rect x="5.5" y="5.5" width="3" height="3" fill="#fff" stroke="#d02020" stroke-width="1"/><path d="M11 6v10M6 11h10" fill="none" stroke="#1c1c1c" stroke-width="1.4" /><path d="M11 5 L9 7.5 H13z M11 17 L9 14.5 H13z M5 11 L7.5 9 V13z M17 11 L14.5 9 V13z" fill="#000"/></g><g transform="translate(57,217)"><path d="M2 1 V13 L5 10 L8 15 L10 14 L7.5 9 L12 9z" fill="#fff" stroke="#1c1c1c" stroke-width="1.2" /></g><g transform="translate(57,239)"><path d="M6 12 L14 3" fill="none" stroke="#1c1c1c" stroke-width="3.5" /><path d="M6.5 11.5 L13.5 3.5" fill="none" stroke="#e0c040" stroke-width="2" /><path d="M1 8 L2 15 H16" fill="none" stroke="#1c1c1c" stroke-width="1.2" /><rect x="2.5" y="12.5" width="3" height="3" fill="#e8e8ff" stroke="#0000a8" stroke-width="1"/></g><g transform="translate(57,261)"><path d="M3 13 L13 3" fill="none" stroke="#1c1c1c" stroke-width="1.4" /><rect x="1.5" y="11.5" width="3" height="3" fill="#e8e8ff" stroke="#0000a8" stroke-width="1"/><rect x="11.5" y="1.5" width="3" height="3" fill="#e8e8ff" stroke="#0000a8" stroke-width="1"/></g><g transform="translate(57,284)"><path d="M8 1v14" fill="none" stroke="#1c1c1c" stroke-width="1.3" /><path d="M8 0 L6 4 H10z M8 16 L6 12 H10z" fill="#000"/><rect x="6.5" y="6.5" width="3" height="3" fill="#e8e8ff" stroke="#0000a8" stroke-width="1"/></g><g transform="translate(57,306)"><path d="M2.5 13.5h7 A4.5 4.5 0 1 0 9.5 4.5" fill="none" stroke="#0000a8" stroke-width="1.2" /><rect x="1.0" y="12.0" width="3" height="3" fill="#e8e8ff" stroke="#0000a8" stroke-width="1"/><rect x="8.0" y="12.0" width="3" height="3" fill="#e8e8ff" stroke="#0000a8" stroke-width="1"/><rect x="8.0" y="3.0" width="3" height="3" fill="#e8e8ff" stroke="#0000a8" stroke-width="1"/></g><g transform="translate(57,328)"><path d="M8 1.5 L14.5 6.5 L12 14.5 H4 L1.5 6.5z" fill="#dce8f0" stroke="#1c1c1c" stroke-width="1.4" /></g><g transform="translate(57,370)"><text x="0" y="7" font-family="Liberation Sans" font-size="7" font-weight="bold" fill="#1c1c1c">ABC</text><path d="M2 10 L6 14 L15 4" fill="none" stroke="#0000a8" stroke-width="2.2" /></g><g transform="translate(57,392)"><path d="M1.5 1.5h13v13h-13z" fill="#fff" stroke="#1c1c1c" stroke-width="1.5" /><text x="2.5" y="8" font-family="Liberation Sans" font-size="6" font-weight="bold" fill="#1c1c1c">A</text><path d="M8 2h5v5h-5z" fill="#fff" stroke="#1c1c1c" stroke-width="1" /><path d="M3 9 L7 13 L14 6" fill="none" stroke="#101060" stroke-width="2.2" /></g><g transform="translate(57,420)"><path d="M4 3v9h10" fill="none" stroke="#1c1c1c" stroke-width="1.3" /><path d="M4 1 L2 4 H6z M16 12 L13 10 V14z" fill="#000"/><rect x="6.5" y="5.5" width="3" height="3" fill="#e8e8ff" stroke="#0000a8" stroke-width="1"/><text x="0" y="5" font-family="Liberation Sans" font-size="5" font-weight="bold" fill="#0000a8">x</text><text x="9" y="16" font-family="Liberation Sans" font-size="5" font-weight="bold" fill="#0000a8">x</text></g><g transform="translate(57,442)"><path d="M1 8 L7 2 L13 8 L7 14z" fill="none" stroke="#1c1c1c" stroke-width="1.2" /><path d="M5 4 L10 9" fill="none" stroke="#1c1c1c" stroke-width="1.3" /><text x="10" y="6" font-family="Liberation Sans" font-size="7" font-weight="bold" fill="#0000a8">?</text></g><g transform="translate(57,464)"><path d="M1 15h13 M1 15 L8 2 M4 7 L12 15" fill="none" stroke="#1c1c1c" stroke-width="1.3" /><path d="M5 6 Q10 6 11 12" fill="none" stroke="#1c1c1c" stroke-width="1" /><text x="9" y="7" font-family="Liberation Sans" font-size="7" font-weight="bold" fill="#0000a8">?</text></g><g transform="translate(57,486)"><path d="M1.5 1.5h13v13h-13z" fill="#a8b4d8" stroke="#1c1c1c" stroke-width="1.3" /><rect x="2" y="2" width="1" height="1" fill="#2030a0"/><rect x="2" y="6" width="1" height="1" fill="#2030a0"/><rect x="2" y="10" width="1" height="1" fill="#2030a0"/><rect x="4" y="4" width="1" height="1" fill="#2030a0"/><rect x="4" y="8" width="1" height="1" fill="#2030a0"/><rect x="4" y="12" width="1" height="1" fill="#2030a0"/><rect x="6" y="2" width="1" height="1" fill="#2030a0"/><rect x="6" y="6" width="1" height="1" fill="#2030a0"/><rect x="6" y="10" width="1" height="1" fill="#2030a0"/><rect x="8" y="4" width="1" height="1" fill="#2030a0"/><rect x="8" y="8" width="1" height="1" fill="#2030a0"/><rect x="8" y="12" width="1" height="1" fill="#2030a0"/><rect x="10" y="2" width="1" height="1" fill="#2030a0"/><rect x="10" y="6" width="1" height="1" fill="#2030a0"/><rect x="10" y="10" width="1" height="1" fill="#2030a0"/><rect x="12" y="4" width="1" height="1" fill="#2030a0"/><rect x="12" y="8" width="1" height="1" fill="#2030a0"/><rect x="12" y="12" width="1" height="1" fill="#2030a0"/><path d="M5 8h6" fill="none" stroke="#0000a8" stroke-width="1.2" /><path d="M2 12h12v2h-12z" fill="#d0d090"/></g><g transform="translate(57,508)"><path d="M1 5 Q4 1 10 2 L13 3 L9 8" fill="none" stroke="#1c1c1c" stroke-width="1.3" /><path d="M6 14 L15 5" fill="none" stroke="#1c1c1c" stroke-width="2.6" /><path d="M7 13 L14 6" fill="none" stroke="#909090" stroke-width="1" /><path d="M4 16 L6 12 L8 14z" fill="#000"/></g><g transform="translate(57,543)"><ellipse cx="8" cy="9" rx="7" ry="4.5" fill="#e0e8ee" stroke="#1c1c1c" stroke-width="1.3"/><rect x="6.5" y="7.5" width="3" height="3" fill="#e8e8ff" stroke="#0000a8" stroke-width="1"/><rect x="13.5" y="7.5" width="3" height="3" fill="#e8e8ff" stroke="#0000a8" stroke-width="1"/><rect x="6.5" y="3.5" width="3" height="3" fill="#e8e8ff" stroke="#0000a8" stroke-width="1"/></g><g transform="translate(57,565)"><ellipse cx="8" cy="9" rx="7" ry="4.5" fill="#e0e8ee" stroke="#1c1c1c" stroke-width="1.3"/><rect x="-0.5" y="7.5" width="3" height="3" fill="#e8e8ff" stroke="#0000a8" stroke-width="1"/><rect x="13.5" y="7.5" width="3" height="3" fill="#e8e8ff" stroke="#0000a8" stroke-width="1"/><rect x="6.5" y="3.0" width="3" height="3" fill="#e8e8ff" stroke="#0000a8" stroke-width="1"/></g><g transform="translate(57,587)"><ellipse cx="8" cy="8" rx="7.5" ry="4" transform="rotate(-40 8 8)" fill="#e0e8ee" stroke="#1c1c1c" stroke-width="1.3"/><rect x="0.5" y="12.5" width="3" height="3" fill="#e8e8ff" stroke="#0000a8" stroke-width="1"/><rect x="12.5" y="0.5" width="3" height="3" fill="#e8e8ff" stroke="#0000a8" stroke-width="1"/><rect x="6.5" y="6.5" width="3" height="3" fill="#e8e8ff" stroke="#0000a8" stroke-width="1"/><rect x="9.5" y="9.5" width="3" height="3" fill="#e8e8ff" stroke="#0000a8" stroke-width="1"/></g><g transform="translate(57,609)"><ellipse cx="8" cy="9" rx="7" ry="4.5" fill="#e0e8ee" stroke="#1c1c1c" stroke-width="1.3"/><rect x="-0.5" y="4.5" width="3" height="3" fill="#e8e8ff" stroke="#0000a8" stroke-width="1"/><rect x="3.5" y="3.5" width="3" height="3" fill="#e8e8ff" stroke="#0000a8" stroke-width="1"/><rect x="13.5" y="11.5" width="3" height="3" fill="#e8e8ff" stroke="#0000a8" stroke-width="1"/></g><g transform="translate(57,630)"><ellipse cx="8" cy="11" rx="7" ry="4" fill="#e0e8ee" stroke="#1c1c1c" stroke-width="1.3"/><text x="2" y="5" font-family="Liberation Sans" font-size="6" font-weight="normal" fill="#0000a8">a:b</text></g><g transform="translate(57,659)"><path d="M1 12 A7 4.5 0 1 1 15 9" fill="none" stroke="#1c1c1c" stroke-width="1.3" /><rect x="-0.5" y="10.5" width="3" height="3" fill="#e8e8ff" stroke="#0000a8" stroke-width="1"/><rect x="6.5" y="12.5" width="3" height="3" fill="#e8e8ff" stroke="#0000a8" stroke-width="1"/></g><g transform="translate(57,681)"><ellipse cx="8" cy="8" rx="7.5" ry="3.5" transform="rotate(-40 8 8)" fill="#e0e8ee" stroke="#1c1c1c" stroke-width="1.3"/><rect x="-0.5" y="13.5" width="3" height="3" fill="#e8e8ff" stroke="#0000a8" stroke-width="1"/><rect x="12.5" y="0.5" width="3" height="3" fill="#e8e8ff" stroke="#0000a8" stroke-width="1"/><rect x="4.5" y="11.5" width="3" height="3" fill="#e8e8ff" stroke="#0000a8" stroke-width="1"/><rect x="10.5" y="4.5" width="3" height="3" fill="#e8e8ff" stroke="#0000a8" stroke-width="1"/></g><g transform="translate(57,703)"><ellipse cx="8" cy="9" rx="7" ry="4.5" fill="#e0e8ee" stroke="#1c1c1c" stroke-width="1.3"/><rect x="-0.5" y="3.5" width="3" height="3" fill="#e8e8ff" stroke="#0000a8" stroke-width="1"/><rect x="3.5" y="3.5" width="3" height="3" fill="#e8e8ff" stroke="#0000a8" stroke-width="1"/><rect x="13.5" y="12.5" width="3" height="3" fill="#e8e8ff" stroke="#0000a8" stroke-width="1"/></g><g transform="translate(57,724)"><path d="M1 14 A7 4.5 0 0 1 15 14" fill="none" stroke="#1c1c1c" stroke-width="1.3" /><path d="M2 13 A6.5 4 0 0 1 14 13z" fill="#e0e8ee"/><text x="2" y="8" font-family="Liberation Sans" font-size="6" font-weight="normal" fill="#0000a8">a:b</text></g><path d="M76 279h-5l5-5z" fill="#000"/><path d="M76 301h-5l5-5z" fill="#000"/><path d="M76 323h-5l5-5z" fill="#000"/><path d="M76 345h-5l5-5z" fill="#000"/><g transform="translate(883,25)"><path d="M2 6 L5 10 L10 1" fill="none" stroke="#30a030" stroke-width="2.2" /><circle cx="9" cy="11" r="3.5" fill="#d8e8f0" stroke="#607080" stroke-width="1"/><path d="M11 13 L14 15" fill="none" stroke="#907020" stroke-width="1.8" /></g><g transform="translate(991,25)"><path d="M8 1 L3 6 H6 V9 H10 V6 H13z" fill="#50c050" stroke="#208020" stroke-width="1" /><circle cx="8.5" cy="10.5" r="3.5" fill="#d8e8f0" stroke="#607080" stroke-width="1"/><path d="M11 13 L14 15" fill="none" stroke="#907020" stroke-width="1.8" /></g><g transform="translate(1117,25)"><path d="M1 6 L8 1 L15 6 V15 H1z" fill="#f8f0c0" stroke="#807040" stroke-width="1" /><circle cx="10" cy="9" r="2.5" fill="#e0a070"/><path d="M6 16 Q10 10 14 16z" fill="#202060"/></g><rect x="1233" y="35" width="7" height="2" fill="#000"/><path d="M1250.5 28.5h6v5h-1.5 M1250.5 28.5v2.5" fill="none" stroke="#000" stroke-width="1"/><rect x="1250" y="28" width="7" height="2" fill="#000"/><path d="M1248.5 31.5h6v5h-6z" fill="none" stroke="#000" stroke-width="1"/><rect x="1248" y="31" width="7" height="2" fill="#000"/><path d="M1265.5 28.5 L1272.5 35.5 M1272.5 28.5 L1265.5 35.5" stroke="#000" stroke-width="2"/><g transform="translate(86,645)"><path d="M2 4 L5 1.5 H11 V7 L8 9.5 H2z M2 4 H8 V9.5 M8 4 L11 1.5" fill="#fff" stroke="#1c1c1c" stroke-width="1.3" /><circle cx="8.5" cy="9" r="3.2" fill="#a0a0a0" stroke="#202020" stroke-width="1.2"/></g><g transform="translate(153,646)"><path d="M1.5 0.5h7l3 3v11h-10z" fill="#fff" stroke="#1c1c1c" stroke-width="1.4" /><text x="4" y="12" font-family="Liberation Sans" font-size="7" font-weight="bold" fill="#1c1c1c">1</text></g><g transform="translate(1262,209)"><path d="M2 8 L8 4 L14 8 V15 H2z" fill="#e01010"/><path d="M8 4 L14 1 M6 2 L12 8" fill="none" stroke="#1c1c1c" stroke-width="1.5" /><text x="9" y="7" font-family="Liberation Sans" font-size="6" font-weight="bold" fill="#1c1c1c">1</text></g><g shape-rendering="crispEdges"><line x1="491.5" y1="205" x2="491.5" y2="642" stroke="#e6e6e6" stroke-width="1" stroke-dasharray="19 4.2 1.3 4.2" stroke-dashoffset="3.7"/><line x1="80" y1="347.5" x2="1239" y2="347.5" stroke="#e6e6e6" stroke-width="1" stroke-dasharray="19 4.2 1.3 4.2" stroke-dashoffset="10.7"/><line x1="82" y1="397.5" x2="1157" y2="397.5" stroke="#f0f0f0" stroke-width="1" stroke-dasharray="1 3.78"/></g><path d="M435.5 347 A56 56 0 0 0 547.5 347" fill="none" stroke="#f0f0f0" stroke-width="1.2" stroke-dasharray="1.2 2.8"/><line x1="547.5" y1="343" x2="547.5" y2="353" stroke="#e0e0e0" stroke-width="1"/><line x1="531.5" y1="419.5" x2="691.5" y2="579.5" stroke="#fff" stroke-width="2"/><line x1="691.5" y1="419.5" x2="531.5" y2="579.5" stroke="#fff" stroke-width="2"/><line x1="143.5" y1="528" x2="143.5" y2="580" stroke="#3c9c3c" stroke-width="2"/><line x1="144" y1="579" x2="195" y2="579" stroke="#c04040" stroke-width="2"/><path d="M146 524.5 L149.5 528.5 L153 524.5 M149.5 528.5 V532.5" fill="none" stroke="#48a048" stroke-width="1.3"/><path d="M145.5 574.5 H153 L145.5 582.5 H153.5" fill="none" stroke="#4848e8" stroke-width="1.5"/><path d="M196.5 575 L204.5 583.5 M204.5 575 L196.5 583.5" fill="none" stroke="#c04848" stroke-width="1.4"/><line x1="475" y1="362.5" x2="518" y2="362.5" stroke="#8a2a2a" stroke-width="1"/><line x1="497.5" y1="352" x2="497.5" y2="384" stroke="#40a040" stroke-width="1"/><circle cx="497" cy="362" r="9.3" fill="none" stroke="#f0f0f0" stroke-width="1.2"/><g transform="translate(492,347.5)"><path d="M-5.5 -5.5 Q0 -3 5.5 -5.5 Q3 0 5.5 5.5 Q0 3 -5.5 5.5 Q-3 0 -5.5 -5.5 Z" fill="#30b830" stroke="#40e040" stroke-width="1.4"/><path d="M-4 -4 L4 4 M4 -4 L-4 4" stroke="#106010" stroke-width="1"/><circle cx="2" cy="0" r="1.6" fill="#d0ffd0"/></g><circle cx="8" cy="9.5" r="7.3" fill="#e01010" stroke="#f0c0c0" stroke-width="1.2"/><path d="M5.5 5.5h2.5a4 4 0 0 1 0 8h-2.5z" fill="none" stroke="#fff" stroke-width="1.3"/><rect x="1192" y="8" width="10" height="3" fill="#f0f0f0"/><path d="M1218.5 5.5h7v7h-7z M1220.5 3.5h7v7" fill="none" stroke="#f0f0f0" stroke-width="1.6"/><path d="M1251 3.5 L1259 11.5 M1259 3.5 L1251 11.5" stroke="#fff" stroke-width="3"/><path d="M1244.5 218.5h8l-4-4z" fill="#404040"/><path d="M1244.5 631.5h8l-4 4z" fill="#404040"/><path d="M1227 651v8l4-4z" fill="#404040"/><path d="M262 651v8l-4-4z" fill="#404040"/><path d="M285 684h8l-4-4z M285 704h8l-4 4z" fill="#505050"/><path d="M1243 684h8l-4-4z M1243 704h8l-4 4z" fill="#505050"/><g fill="#909090"><rect x="112" y="672" width="1" height="1"/><rect x="112" y="674" width="1" height="1"/><rect x="112" y="676" width="1" height="1"/><rect x="112" y="678" width="1" height="1"/><rect x="112" y="680" width="1" height="1"/><rect x="112" y="682" width="1" height="1"/><rect x="112" y="684" width="1" height="1"/><rect x="112" y="686" width="1" height="1"/><rect x="112" y="688" width="1" height="1"/><rect x="112" y="690" width="1" height="1"/><rect x="112" y="692" width="1" height="1"/><rect x="112" y="694" width="1" height="1"/><rect x="112" y="696" width="1" height="1"/><rect x="114" y="680" width="1" height="1"/><rect x="114" y="696" width="1" height="1"/><rect x="116" y="680" width="1" height="1"/><rect x="116" y="696" width="1" height="1"/><rect x="118" y="680" width="1" height="1"/><rect x="118" y="696" width="1" height="1"/><rect x="120" y="680" width="1" height="1"/><rect x="120" y="696" width="1" height="1"/></g><rect x="177" y="722" width="1" height="18" fill="#c0c0c0"/><g transform="translate(87,723)"><path d="M1.5 0.5h10v14h-10z" fill="#fff" stroke="#202080" stroke-width="1.2"/><path d="M4 3.5h4M5 5.5h4M4 7.5h4M5 9.5h4M4 11.5h4" stroke="#d02020" stroke-width="1"/></g><g transform="translate(110,723)"><path d="M1.5 1.5h12v12h-12z" fill="#fff" stroke="#202080" stroke-width="1.4"/><path d="M4 7.5h5M7 5l3 2.5l-3 2.5" stroke="#e02020" stroke-width="1.6" fill="none"/></g><g transform="translate(133,723)"><path d="M1.5 1.5h12v12h-12z" fill="#fff" stroke="#202080" stroke-width="1.4"/><path d="M7.5 4v7M4 7.5h7" stroke="#2020c0" stroke-width="1.4"/></g><g transform="translate(156,723)"><path d="M1.5 1.5h12v12h-12z" fill="#fff" stroke="#202080" stroke-width="1.4"/><path d="M4.5 6h6M4.5 9h6" stroke="#208020" stroke-width="1.4"/></g><g transform="translate(186,724)"><path d="M1.5 1.5h8v10h-8z" fill="#fff" stroke="#802040" stroke-width="1.3"/><path d="M3.5 4.5h4M3.5 6.5h4M3.5 8.5h4" stroke="#c02020" stroke-width="1"/><path d="M9 15h5v-5z" fill="#000"/></g><g transform="translate(208,724)"><path d="M6.5 1v11M1 6.5h11" stroke="#2020d0" stroke-width="1.4"/><circle cx="6.5" cy="6.5" r="2.5" fill="#fff" stroke="#2020d0" stroke-width="1.2"/><path d="M10 15h5v-5z" fill="#000"/></g><path d="M980.5 749.5h6v5h-6z" fill="#fff" stroke="#404040"/><path d="M980 757 L987 767 M987 757 L980 767" stroke="#606060" stroke-width="1"/><path d="M1075.5 749.5h6v5h-6z" fill="#fff" stroke="#404040"/><path d="M1075 757 L1078.5 762 L1082 757 M1078.5 762 V767" stroke="#606060" stroke-width="1" fill="none"/><rect x="933" y="747" width="1" height="20" fill="#d0d0d0"/><rect x="965" y="747" width="1" height="20" fill="#d0d0d0"/><rect x="1165" y="747" width="1" height="20" fill="#d0d0d0"/><rect x="1218" y="747" width="1" height="20" fill="#d0d0d0"/><g transform="translate(1160,370)"><rect x="0" y="3.5" width="5.5" height="4.5" fill="#101060"/><path d="M4 3.5 V2 a1.8 1.8 0 0 1 3.6 0 V2.5" fill="none" stroke="#101060" stroke-width="1.2"/></g><defs><radialGradient id="orb" cx="50%" cy="35%" r="60%"><stop offset="0" stop-color="#6ab0e0"/><stop offset="0.5" stop-color="#2a6aa0"/><stop offset="1" stop-color="#0a2a50"/></radialGradient></defs><circle cx="30" cy="787.5" r="21.5" fill="#202224" opacity="0.9"/><circle cx="30" cy="787.5" r="18.5" fill="url(#orb)" stroke="#c0d4e4" stroke-width="1.5"/><ellipse cx="30" cy="778" rx="13" ry="7" fill="#ffffff" opacity="0.25"/><path d="M21 777 q4.5 -2.2 8.5 0 v7 q-4 -2.2 -8.5 0z" fill="#f06030"/><path d="M31 777 q4 -2.2 8.5 0 v7 q-4.5 -2.2 -8.5 0z" fill="#70c030"/><path d="M21 786 q4.5 -2.2 8.5 0 v7 q-4 -2.2 -8.5 0z" fill="#30a0f0"/><path d="M31 786 q4 -2.2 8.5 0 v7 q-4.5 -2.2 -8.5 0z" fill="#f0c020"/><rect x="65" y="773" width="1.5" height="1.5" fill="#707070"/><rect x="65" y="777" width="1.5" height="1.5" fill="#707070"/><rect x="65" y="781" width="1.5" height="1.5" fill="#707070"/><rect x="65" y="785" width="1.5" height="1.5" fill="#707070"/><rect x="65" y="789" width="1.5" height="1.5" fill="#707070"/><rect x="65" y="793" width="1.5" height="1.5" fill="#707070"/><rect x="69" y="773" width="1.5" height="1.5" fill="#707070"/><rect x="69" y="777" width="1.5" height="1.5" fill="#707070"/><rect x="69" y="781" width="1.5" height="1.5" fill="#707070"/><rect x="69" y="785" width="1.5" height="1.5" fill="#707070"/><rect x="69" y="789" width="1.5" height="1.5" fill="#707070"/><rect x="69" y="793" width="1.5" height="1.5" fill="#707070"/><rect x="250" y="773" width="1.5" height="1.5" fill="#707070"/><rect x="250" y="777" width="1.5" height="1.5" fill="#707070"/><rect x="250" y="781" width="1.5" height="1.5" fill="#707070"/><rect x="250" y="785" width="1.5" height="1.5" fill="#707070"/><rect x="250" y="789" width="1.5" height="1.5" fill="#707070"/><rect x="250" y="793" width="1.5" height="1.5" fill="#707070"/><rect x="254" y="773" width="1.5" height="1.5" fill="#707070"/><rect x="254" y="777" width="1.5" height="1.5" fill="#707070"/><rect x="254" y="781" width="1.5" height="1.5" fill="#707070"/><rect x="254" y="785" width="1.5" height="1.5" fill="#707070"/><rect x="254" y="789" width="1.5" height="1.5" fill="#707070"/><rect x="254" y="793" width="1.5" height="1.5" fill="#707070"/><rect x="1018" y="773" width="1.5" height="1.5" fill="#707070"/><rect x="1018" y="777" width="1.5" height="1.5" fill="#707070"/><rect x="1018" y="781" width="1.5" height="1.5" fill="#707070"/><rect x="1018" y="785" width="1.5" height="1.5" fill="#707070"/><rect x="1018" y="789" width="1.5" height="1.5" fill="#707070"/><rect x="1018" y="793" width="1.5" height="1.5" fill="#707070"/><rect x="1022" y="773" width="1.5" height="1.5" fill="#707070"/><rect x="1022" y="777" width="1.5" height="1.5" fill="#707070"/><rect x="1022" y="781" width="1.5" height="1.5" fill="#707070"/><rect x="1022" y="785" width="1.5" height="1.5" fill="#707070"/><rect x="1022" y="789" width="1.5" height="1.5" fill="#707070"/><rect x="1022" y="793" width="1.5" height="1.5" fill="#707070"/><g transform="translate(80,775)"><rect x="0" y="0" width="16" height="18" fill="#fff"/><path d="M0 0h16v9h-16z" fill="#e02020"/><text x="1" y="7" font-family="Liberation Sans" font-size="6" font-weight="bold" fill="#fff">PDF</text><text x="4" y="16" font-family="Liberation Sans" font-size="6" fill="#808080">DXF</text></g><circle cx="111" cy="784" r="7.5" fill="#e07020"/><circle cx="112" cy="782" r="4" fill="#3050a0"/><path d="M104 784 q2 8 10 7 q-6 -3 -3 -9" fill="#f0a030"/><rect x="127" y="778" width="16" height="12" fill="#4080c0" stroke="#a0c0e0" stroke-width="1"/><rect x="129" y="780" width="12" height="7" fill="#2060b0"/><rect x="150" y="778" width="16" height="13" fill="#3a70b0" stroke="#c0d8f0" stroke-width="1"/><rect x="153" y="781" width="8" height="5" fill="#fff" opacity=".8"/><rect x="156" y="784" width="8" height="5" fill="#fff" opacity=".9"/><path d="M175 776h9l3 3v13h-12z" fill="#f4f4f4"/><text x="196" y="791" font-family="Liberation Serif" font-size="17" font-style="italic" font-weight="bold" fill="#2a8ae0">e</text><path d="M194 790 q8 -16 16 -10" fill="none" stroke="#f0c030" stroke-width="1.5"/><path d="M229 779 l3 3 l-3 3 M233 779 l3 3 l-3 3" fill="none" stroke="#fff" stroke-width="1.4"/><circle cx="280" cy="785" r="7" fill="#e01010" stroke="#f0b0b0" stroke-width="1.2"/><path d="M277.5 781h2.5a3.8 3.8 0 0 1 0 7.6h-2.5z" fill="none" stroke="#fff" stroke-width="1.3"/><circle cx="439" cy="784" r="7" fill="#e07020"/><circle cx="440" cy="782" r="3.5" fill="#3050a0"/><path d="M432 784 q2 8 10 7 q-6 -3 -3 -9" fill="#f0a030"/><rect x="1059" y="781" width="14" height="8" rx="1" fill="#c8c8c8" stroke="#e0e0e0"/><path d="M1061 783h10M1061 785h10M1062 787h8" stroke="#808080" stroke-width="0.8"/><path d="M1101 790h2v-3h-2z M1104 790h2v-6h-2z M1107 790h2v-9h-2z M1110 790h2v-12h-2z" fill="#30d030"/><ellipse cx="1125" cy="784" rx="6" ry="8" fill="#2040c0"/><path d="M1123 779 L1127 782 L1123 786 L1127 789 V779z M1121 782 L1127 788 M1121 786 L1127 781" stroke="#ff2020" stroke-width="1.2" fill="none"/><rect x="1136" y="777" width="14" height="10" fill="#d0d0e0" stroke="#304080" stroke-width="1.4"/><rect x="1134" y="787" width="18" height="3" fill="#304080"/><rect x="1155" y="776" width="6" height="14" fill="#909090"/><circle cx="1163" cy="787" r="4" fill="#30b030"/><path d="M1161 787 l1.5 1.5 l3 -3" stroke="#fff" stroke-width="1.2" fill="none"/><path d="M1184 776v4M1188 776v4" stroke="#fff" stroke-width="1.5"/><rect x="1183" y="780" width="7" height="6" fill="#f0f0f0"/><path d="M1186 786v5" stroke="#fff" stroke-width="2"/><rect x="1190" y="778" width="6" height="12" fill="#a0e0a0" stroke="#fff"/><rect x="1200" y="777" width="10" height="8" fill="#3a80d0" stroke="#d0e0f0"/><rect x="1204" y="781" width="10" height="8" fill="#3a80d0" stroke="#d0e0f0"/><circle cx="1212" cy="789" r="3" fill="#30a0e0"/><path d="M1219 781h3l4 -4v14l-4 -4h-3z" fill="#e0e0e0"/><path d="M1228 780 q2 4 0 8 M1230 778 q3 6 0 12" stroke="#40c040" stroke-width="1.2" fill="none"/><g fill="none" stroke="#e41a1a" stroke-width="3.6" stroke-linecap="round" stroke-linejoin="round"><path d="M918 159 C906 152 902 136 906 126 C911 114 928 112 938 118 C948 126 950 144 943 154 C936 163 924 165 916 160"/><path d="M877 222 L919 158 M890 161 L919 159 L923 182"/><path d="M1081 159 C1075 150 1075 130 1079 122 C1083 114 1095 113 1100 121 C1105 131 1104 150 1099 157 C1095 163 1086 163 1081 157"/><path d="M1057 227 L1081 159 M1054 176 L1081 160 L1086 183"/></g></svg></body></html>
